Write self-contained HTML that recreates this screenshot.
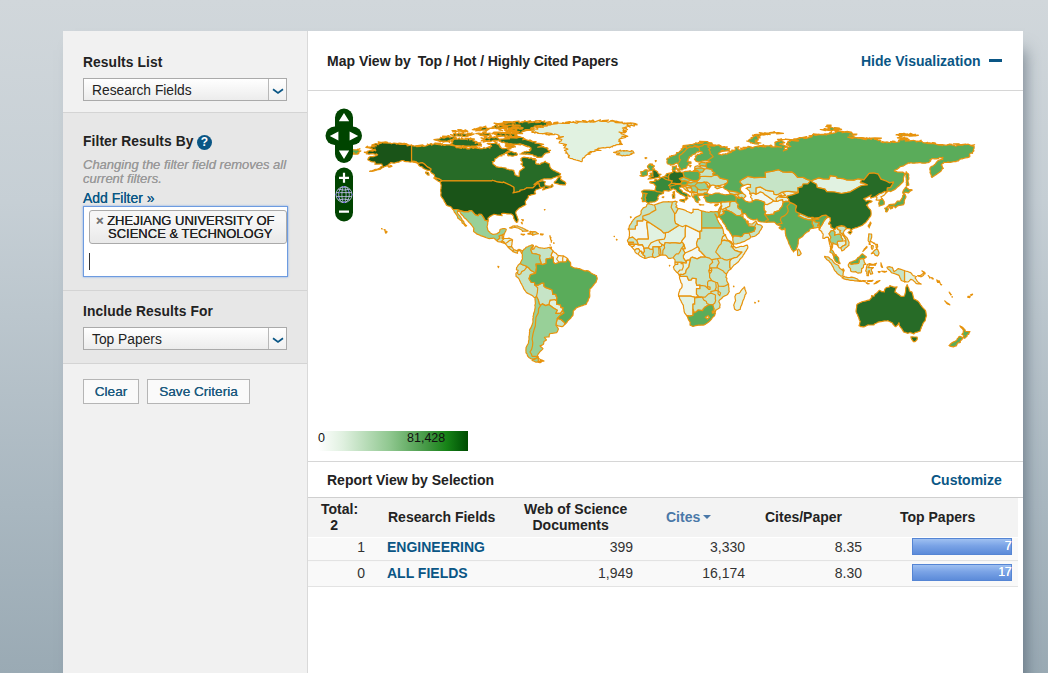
<!DOCTYPE html>
<html><head><meta charset="utf-8"><title>Essential Science Indicators</title>
<style>
*{box-sizing:border-box;margin:0;padding:0}
html,body{width:1048px;height:673px;overflow:hidden}
body{font-family:"Liberation Sans",Arial,sans-serif;font-size:14px;color:#222;
background:linear-gradient(180deg,#d1d7db 0%,#c6cfd5 30%,#a9b7c0 75%,#9aaab4 100%);position:relative}
#wrap{position:absolute;left:63px;top:31px;width:960px;height:660px;background:#fff;box-shadow:7px 14px 15px -5px rgba(50,65,82,.55)}
#side{position:absolute;left:0;top:0;width:245px;height:660px;background:#f1f1f1;border-right:1px solid #d9d9d9}
.sec{position:absolute;left:0;width:244px;border-top:1px solid #d4d4d4}
.h{position:absolute;left:20px;font-weight:bold;font-size:13.8px;color:#222;white-space:nowrap;letter-spacing:.1px}
.sel{position:absolute;left:20px;width:204px;height:23px;border:1px solid #aaa;background:linear-gradient(#fff,#ececec);font-size:13.8px;line-height:23px;padding-left:8px;color:#222}
.sel i{position:absolute;right:0;top:0;width:18px;height:21px;border-left:1px solid #b8b8b8;background:linear-gradient(#fff,#f0f0f0)}
.sel i svg{position:absolute;left:3px;top:9.2px}
.btn{position:absolute;height:25px;border:1px solid #b5b5b5;background:#fafafa;color:#1d5a7e;font-size:13.6px;line-height:24.5px;text-align:center;text-shadow:0 0 .6px #1d5a7e}
#main{position:absolute;left:245px;top:0;width:715px;height:660px;background:#fff}
.mh{position:absolute;font-weight:bold;font-size:14px;color:#222;white-space:nowrap}
.lnk{position:absolute;font-weight:bold;font-size:14px;color:#0a5685;white-space:nowrap}
.hr{position:absolute;left:0;width:715px;height:1px;background:#d6d6d6}
table{border-collapse:collapse}
</style></head><body>
<div id="wrap">
<div id="side">
 <div class="h" style="top:24px">Results List</div>
 <div class="sel" style="top:47px">Research Fields<i><svg width="12" height="7" viewBox="0 0 12 7"><path d="M1 1.2 L6 5 L11 1.2" fill="none" stroke="#0a5685" stroke-width="1.7"/></svg></i></div>
 <div class="sec" style="top:81px;height:179px;background:#e7e7e7">
  <div class="h" style="top:21px">Filter Results By</div>
  <div style="position:absolute;left:134px;top:22px;width:15px;height:15px;border-radius:50%;background:#0a5685;color:#fff;font-weight:bold;font-size:12px;line-height:15px;text-align:center">?</div>
  <div style="position:absolute;left:20px;top:45px;width:215px;font-style:italic;font-size:13px;line-height:14px;color:#999;text-shadow:0 0 .4px #999">Changing the filter field removes all current filters.</div>
  <div style="position:absolute;left:20px;top:77px;font-size:14px;color:#0a5685;text-shadow:0 0 .4px #0a5685">Add Filter »</div>
  <div style="position:absolute;left:20px;top:93px;width:205px;height:71px;border:1px solid #6d9be0;background:#fff;box-shadow:0 0 2px #7aa7e8">
   <div style="position:absolute;left:5px;top:3px;width:198px;height:34px;border:1px solid #aaa;border-radius:3px;background:linear-gradient(#f6f6f6 30%,#e9e9e9);font-size:13px;line-height:13px;color:#222;text-shadow:0 0 .5px #222;padding:3px 0 0 0;text-align:right;padding-right:11.5px;white-space:nowrap"><span style="position:absolute;left:6px;top:2.5px;font-size:13px;font-weight:bold;color:#777;text-shadow:0 0 .5px #777">×</span>ZHEJIANG UNIVERSITY OF<br><span style="padding-right:2px">SCIENCE &amp; TECHNOLOGY</span></div>
   <div style="position:absolute;left:5px;top:46px;width:1px;height:17px;background:#333"></div>
  </div>
 </div>
 <div class="sec" style="top:259px;height:74px;background:#e7e7e7">
  <div class="h" style="top:13px">Include Results For</div>
  <div class="sel" style="top:36px">Top Papers<i><svg width="12" height="7" viewBox="0 0 12 7"><path d="M1 1.2 L6 5 L11 1.2" fill="none" stroke="#0a5685" stroke-width="1.7"/></svg></i></div>
 </div>
 <div class="sec" style="top:332px;height:328px;background:#f1f1f1">
  <div class="btn" style="left:20px;top:15px;width:56px">Clear</div>
  <div class="btn" style="left:84px;top:15px;width:103px">Save Criteria</div>
 </div>
</div>
<div id="main">
 <div class="mh" style="left:19px;top:22px">Map View by <span style="margin-left:3px;letter-spacing:-.1px">Top / Hot / Highly Cited Papers</span></div>
 <div class="lnk" style="left:553px;top:22px">Hide Visualization</div>
 <div style="position:absolute;left:681px;top:28px;width:13px;height:3px;background:#0a5685"></div>
 <div class="hr" style="top:59px"></div>
 <div id="map" style="position:absolute;left:0;top:60px;width:715px;height:370px;overflow:hidden">
<svg width="715" height="370" viewBox="0 0 715 370" style="position:absolute;left:0;top:0">
<g stroke="#e8930c" stroke-width="1.2" stroke-linejoin="round">
<path fill="#c6e4c6" stroke="none" d="M339.7,112.8L346.2,114.0L350.0,112.6L355.2,110.9L360.5,110.7L364.5,110.9L367.5,110.2L369.2,110.9L367.8,113.3L368.9,115.0L367.8,115.9L370.1,117.5L376.2,118.9L383.2,122.3L385.0,121.1L385.0,118.2L390.2,118.3L393.7,120.1L400.7,121.3L402.4,120.6L405.9,120.8L406.8,123.0L408.6,126.3L409.4,128.9L412.1,133.3L414.5,136.8L415.0,138.5L415.4,142.5L417.5,143.7L419.4,148.8L422.0,150.0L425.3,152.9L425.5,155.0L427.8,156.9L432.2,155.5L435.7,155.4L439.3,154.1L439.8,156.9L438.3,159.4L437.1,161.1L433.9,166.3L430.4,170.7L426.0,174.1L422.7,178.0L420.3,179.7L418.5,183.2L417.8,186.3L419.0,187.2L418.7,189.8L420.6,193.1L421.0,197.1L421.3,200.5L419.6,203.5L415.5,205.6L414.3,206.8L411.2,209.4L410.8,210.8L412.1,213.4L411.9,216.7L407.7,219.1L407.5,220.7L407.5,221.8L406.6,224.5L404.2,227.0L402.4,229.4L399.3,232.0L397.2,233.4L394.9,234.1L389.3,234.3L385.0,235.5L382.2,234.3L381.8,230.6L380.2,228.0L378.8,224.7L376.6,221.9L375.3,214.1L373.4,211.2L370.6,205.1L370.6,202.8L371.9,198.5L373.8,196.6L374.1,193.6L372.7,190.6L371.5,185.6L371.0,183.7L369.4,181.8L366.8,179.2L365.4,176.2L366.6,174.7L367.1,173.3L367.1,171.0L367.0,168.9L365.6,167.2L364.9,166.8L362.2,167.4L360.5,167.5L358.7,165.1L357.5,164.1L354.7,164.1L352.1,164.4L349.1,165.8L346.5,166.8L345.1,166.1L342.1,166.0L339.5,166.7L336.9,167.4L334.3,166.3L331.1,164.1L329.9,163.0L328.1,162.1L326.9,160.4L326.8,159.4L324.7,157.1L323.8,155.9L322.0,154.5L320.8,153.4L320.6,151.9L319.4,149.5L321.2,147.0L321.5,142.0L321.2,139.4L320.3,138.0L322.0,133.8L324.7,129.8L326.9,126.9L330.8,124.9L332.9,123.2L333.0,120.3L335.1,117.1L338.1,115.7Z"/>
<path fill="#f2f8f2" d="M245.1,160.1L245.9,160.9L247.4,161.9L248.4,162.6L249.1,163.7L250.4,164.6L249.8,166.0L248.6,168.0L251.2,171.5L247.2,172.7L245.5,171.5L245.1,166.0L243.9,166.0L243.0,164.6L243.9,162.0ZM250.4,164.6L251.8,164.6L253.2,164.8L254.0,164.8L255.6,164.9L254.7,166.7L254.7,171.0L252.1,171.0L251.2,171.5L248.6,168.0L249.8,166.0ZM255.6,164.9L256.4,165.5L257.7,166.3L258.8,167.1L259.6,167.7L258.2,170.8L254.7,171.0L254.7,166.7ZM441.8,102.4L445.3,102.0L447.9,103.2L450.5,102.0L452.3,100.8L454.9,101.7L456.6,103.4L458.4,104.6L462.7,107.4L466.2,110.0L465.4,110.0L462.7,111.9L459.2,113.6L456.6,113.1L456.6,111.4L454.0,110.3L450.2,109.0L447.9,108.8L444.4,110.0L444.0,108.8L444.0,107.4L443.3,106.9L442.6,106.3L442.8,105.2L443.5,104.1L442.3,103.4ZM567.3,105.5L571.6,102.5L573.7,102.0L576.9,100.3L578.5,101.5L577.4,102.7L576.7,103.7L575.6,104.4L574.3,105.3L572.9,105.8L573.5,106.8L574.3,107.9L571.5,109.3L570.6,109.1L569.1,109.2L568.0,109.0L568.7,107.7L569.0,106.3L567.9,105.9ZM456.5,123.2L459.2,123.9L465.9,123.2L466.2,121.1L471.1,119.6L472.4,117.3L474.1,115.6L475.0,112.1L475.9,111.0L480.8,110.5L478.9,110.5L477.6,110.2L475.0,111.0L474.6,108.6L472.4,109.0L468.9,110.5L467.6,110.3L466.3,110.2L465.4,110.0L462.7,111.9L459.2,113.6L456.6,113.1L455.9,115.9L456.3,119.4L457.9,120.8ZM511.3,138.8L511.9,136.9L513.1,135.0L514.3,133.3L516.1,129.8L517.8,127.7L520.1,125.8L522.2,126.7L522.5,129.8L520.6,132.8L522.7,133.3L523.1,136.4L524.8,137.3L526.1,137.4L526.9,137.6L525.3,139.5L523.1,139.9L521.0,142.8L522.9,146.3L521.7,148.9L523.4,152.4L524.1,154.5L522.5,157.6L522.7,156.5L522.1,155.2L522.2,154.1L521.5,152.9L521.4,151.6L521.1,150.6L520.8,149.3L520.6,147.8L520.4,146.3L519.0,146.2L517.8,146.3L516.9,147.0L516.6,147.5L516.0,147.4L514.8,147.2L514.9,146.1L515.0,144.8L515.2,143.7L514.9,142.7L514.0,141.8L513.8,140.8L512.7,139.8ZM320.3,138.0L327.3,138.0L327.3,135.0L329.0,134.3L329.0,129.8L334.8,129.8L334.8,127.6L341.4,131.6L338.7,131.6L339.6,139.2L340.4,146.7L340.4,148.1L333.4,148.1L329.9,148.2L328.7,149.6L324.7,146.1L321.2,147.0L321.1,145.9L321.5,144.4L321.4,143.4L321.5,142.0L321.4,140.8L321.2,139.4L320.6,138.7ZM377.8,134.3L392.0,141.1L392.0,147.7L390.0,147.9L388.5,152.4L389.3,155.9L383.2,159.4L377.1,162.0L374.5,157.8L377.1,157.6L376.0,153.8L375.3,152.4L373.8,151.2L373.6,150.0L377.1,145.6L377.1,138.5ZM371.5,185.6L372.7,185.3L373.6,185.3L379.0,185.3L380.6,189.1L383.2,188.9L384.1,187.2L388.3,187.7L388.1,191.5L388.8,194.3L392.0,193.9L392.0,197.6L388.5,197.6L388.5,203.2L390.9,205.6L387.4,206.3L382.3,205.2L374.5,205.2L370.6,205.1L370.5,203.9L370.6,202.8L371.0,201.3L371.6,199.9L371.9,198.5L372.9,197.6L373.8,196.6L374.1,195.2L374.1,193.6L373.8,192.6L372.9,191.6L372.7,190.6L372.4,189.4L371.8,188.0L371.5,186.9ZM371.0,183.7L371.9,183.2L372.4,182.8L372.7,183.7L372.4,184.3L371.5,185.1ZM323.8,155.9L326.1,154.7L326.1,153.1L329.9,153.4L329.9,153.8L334.3,153.6L335.5,155.9L336.0,157.3L336.5,160.4L335.5,161.8L333.6,162.1L333.7,160.4L332.0,160.2L331.3,158.8L330.4,157.6L328.3,157.8L326.8,159.4L325.6,158.1L324.7,157.1ZM377.1,162.0L383.2,159.4L389.3,155.9L390.0,155.9L391.3,157.6L391.1,159.4L392.3,160.2L394.0,162.0L397.9,166.1L392.7,166.1L389.2,167.9L384.1,166.1L382.3,167.5L382.5,168.9L378.8,169.3L378.3,171.2L375.5,167.2L375.3,164.6Z"/>
<path fill="#e1f2e1" d="M194.1,143.9L196.2,142.8L195.9,144.1L195.6,145.3L195.7,146.3L194.6,147.4L194.1,147.4ZM193.9,150.0L195.7,147.7L197.1,147.5L198.7,147.5L199.8,147.4L201.4,147.2L202.5,147.7L203.8,148.3L204.6,148.9L201.8,149.3L199.7,151.0L197.9,152.4L196.7,152.2L195.7,150.8ZM204.6,148.9L204.3,150.3L204.0,151.8L204.0,153.3L203.6,154.7L203.7,155.9L200.0,155.9L199.3,155.1L198.6,154.1L197.8,153.3L196.7,152.4L197.9,152.4L199.7,151.0L201.8,149.3ZM219.9,143.0L220.8,143.1L222.4,143.1L223.3,143.2L224.2,143.6L224.7,144.1L224.7,140.8L223.4,140.7L222.7,140.4L221.7,140.8L222.4,141.4L223.1,142.0L222.1,142.3L221.2,142.4L219.9,142.7ZM222.4,39.1L217.3,39.6L224.7,38.2L225.2,37.2L226.5,37.8L229.7,38.2L229.7,36.1L227.0,35.6L229.2,37.1L231.1,36.0L231.1,36.1L235.3,36.5L233.0,34.3L233.3,34.2L232.0,33.6L239.6,34.7L235.5,35.0L237.1,34.6L238.2,34.0L242.5,34.0L243.3,33.5L249.5,32.6L245.1,32.5L245.0,33.1L248.8,32.5L247.2,32.5L250.0,31.2L249.6,31.0L245.8,31.7L254.9,32.5L254.1,32.4L254.8,31.7L257.9,32.5L253.5,32.5L261.4,32.3L259.7,30.8L262.6,30.8L261.5,30.5L257.5,31.3L265.7,31.3L269.2,32.3L264.9,30.6L268.4,32.0L273.1,30.5L267.6,30.0L271.3,31.1L271.4,30.6L279.1,31.3L276.6,30.6L275.9,29.7L278.7,30.6L274.3,29.5L277.4,29.8L279.3,31.2L281.9,29.5L282.4,31.4L281.9,31.1L285.3,29.2L285.9,31.1L281.3,31.0L284.8,29.0L286.9,30.9L292.4,28.7L291.8,30.3L293.8,30.0L294.1,29.7L300.6,29.0L297.8,30.1L293.6,30.4L296.6,29.8L300.2,31.2L303.4,29.8L304.2,29.4L308.5,30.6L302.4,29.8L307.3,30.3L306.3,30.7L308.0,31.7L314.2,31.9L308.0,30.2L311.5,31.9L310.0,31.5L313.3,31.1L314.4,31.1L315.0,32.5L314.3,31.8L314.7,31.6L315.8,32.9L320.4,31.8L319.9,33.3L316.3,32.1L323.4,32.6L321.7,31.8L324.6,32.2L327.6,32.6L325.6,33.2L329.0,34.0L329.0,33.2L326.2,33.1L327.3,32.8L326.3,35.1L323.5,34.1L321.9,34.9L318.9,34.3L322.2,36.2L320.3,35.3L320.0,35.5L314.4,37.1L318.7,37.3L317.5,36.1L315.9,37.7L315.0,39.5L319.5,38.6L316.3,40.4L318.5,40.3L317.2,41.7L315.2,40.4L316.4,42.0L310.9,41.0L313.3,41.9L313.3,42.9L313.0,42.5L319.8,45.3L313.9,45.3L316.8,45.5L317.7,46.5L312.7,47.7L313.5,46.8L311.0,48.6L311.5,49.1L311.5,49.0L312.8,50.4L310.5,50.0L313.5,52.3L311.5,52.5L314.4,53.3L309.0,53.6L307.5,54.1L307.3,54.6L305.0,54.7L304.7,55.4L304.6,55.9L303.8,55.4L301.4,56.8L302.7,56.1L299.0,56.4L297.9,56.7L298.5,56.6L297.4,56.8L294.8,56.7L295.6,56.7L294.1,56.8L289.7,57.6L291.0,57.1L291.4,57.5L286.8,59.0L293.0,59.5L290.2,59.2L287.8,59.7L286.9,60.4L285.3,60.6L284.6,60.6L282.0,60.6L283.3,61.7L281.1,61.7L280.1,62.0L282.1,63.1L279.4,63.3L277.3,64.9L277.0,65.4L276.6,66.4L274.9,67.1L274.2,68.5L274.4,69.2L274.0,70.7L272.2,70.3L271.3,69.8L269.6,69.3L267.8,69.0L267.0,68.6L265.3,68.3L264.3,67.6L262.2,67.3L260.3,66.5L261.2,65.2L260.3,65.2L261.4,64.6L260.0,63.8L259.5,62.4L257.3,62.0L258.8,61.5L257.8,60.0L256.5,59.4L259.9,58.1L257.3,57.0L256.0,56.9L257.4,55.1L258.1,53.9L255.4,54.3L258.5,53.7L253.9,52.5L251.1,52.0L251.6,50.3L252.9,50.2L253.9,48.5L252.1,48.1L248.5,47.6L255.4,45.6L250.5,46.2L251.1,44.6L249.1,43.5L246.5,43.0L246.9,43.3L246.5,43.6L238.2,43.7L237.4,42.8L241.0,44.2L243.8,43.0L242.6,42.9L244.2,42.6L239.0,41.8L234.4,42.9L234.9,42.8L234.6,42.9L235.2,42.7L230.4,42.4L229.2,42.2L230.2,41.9L227.3,41.1L227.7,40.8L227.0,42.2L225.9,41.2L223.9,41.3L226.0,41.1L223.4,39.9ZM240.8,213.6L242.0,209.2L246.9,208.5L248.6,209.8L248.6,213.2L252.5,213.8L253.0,216.7L255.1,216.7L254.6,219.3L252.5,222.4L247.6,222.3L249.3,219.3L245.1,216.7ZM378.0,96.4L383.2,96.8L384.1,98.5L383.7,99.7L382.3,101.1L380.6,100.3ZM382.3,101.1L383.7,99.7L385.0,101.0L383.7,102.2L383.3,101.8ZM383.7,102.2L385.0,101.0L385.8,100.6L386.0,103.7L386.7,104.1L385.0,106.0L384.5,105.5L383.9,104.8L383.7,103.5ZM385.8,100.6L387.6,101.7L389.2,101.5L390.2,103.2L386.7,104.1L386.0,103.7ZM396.5,91.2L398.9,91.1L401.0,92.4L402.4,94.4L399.3,96.1L399.3,94.0ZM447.9,103.2L447.9,96.8L452.4,95.9L458.4,99.4L465.4,100.3L466.2,103.4L468.9,103.7L470.6,103.0L474.1,101.1L477.6,104.3L474.1,105.1L473.2,103.7L470.6,105.1L469.7,106.3L468.0,107.2L468.5,110.3L467.4,110.2L466.2,110.0L462.7,107.4L458.4,104.6L456.6,103.4L454.9,101.7L452.3,100.8L450.5,102.0ZM470.6,103.0L474.1,101.1L478.5,100.3L481.1,100.4L488.1,101.1L489.0,101.5L490.4,101.8L487.2,102.9L484.2,103.9L479.4,105.1L478.8,106.3L474.1,106.3L471.5,106.2L473.2,105.1L474.1,105.1L477.6,104.3L474.1,101.1ZM468.0,107.2L469.7,106.3L470.6,105.1L473.2,103.7L474.1,105.1L473.2,105.1L471.5,106.2L474.1,106.3L478.8,106.3L480.8,108.1L480.8,110.2L479.1,110.3L477.6,110.2L475.0,111.0L474.6,108.6L472.4,109.0L468.9,110.5L468.5,110.3ZM503.8,89.5L510.8,86.9L515.2,87.9L521.0,88.1L522.2,84.6L528.6,85.7L529.2,87.2L535.3,87.6L538.8,89.0L545.8,89.1L550.1,87.8L554.0,88.3L552.4,91.6L555.4,92.1L559.4,93.8L553.6,94.5L549.3,96.8L545.4,99.0L542.3,100.8L533.5,102.5L526.5,101.0L518.7,100.6L516.9,98.2L509.1,96.4L508.5,93.3L503.8,90.7ZM505.2,126.3L505.6,127.2L510.8,126.7L510.8,128.2L505.6,128.4ZM412.9,112.4L414.2,110.7L416.4,111.0L419.9,110.7L423.9,110.3L422.0,111.6L421.7,115.2L417.8,117.0L414.3,118.7L412.6,117.1L413.8,115.0L413.1,113.8L412.8,112.6ZM525.3,139.5L526.9,137.6L527.1,138.2L528.8,135.9L530.0,138.5L532.7,139.5L531.8,141.1L533.9,142.8L536.2,145.5L537.9,148.6L537.9,149.6L535.3,150.0L534.4,150.0L534.6,148.1L533.2,146.7L533.2,144.8L531.8,143.2L528.5,143.5L526.5,144.4L526.9,141.1ZM529.9,154.7L529.2,151.5L530.0,150.1L534.4,150.0L535.3,150.0L537.9,149.6L537.9,153.6L534.9,155.0L532.7,156.9L531.7,156.8L530.9,156.6L530.2,155.7ZM596.5,179.5L597.4,180.0L599.0,180.3L600.4,180.8L601.1,181.1L602.6,181.6L603.6,182.5L604.2,183.6L605.2,184.6L606.1,184.8L607.4,185.3L608.4,185.6L607.7,186.1L607.0,186.8L607.9,188.0L608.7,189.3L609.6,190.6L610.5,191.4L611.8,192.3L613.1,193.1L611.6,193.0L610.1,192.8L608.7,192.7L607.6,192.0L606.9,190.9L606.0,190.2L605.2,189.3L604.0,188.7L602.6,188.4L602.0,189.2L601.1,190.1L600.0,191.0L598.8,191.0L597.7,190.7L596.5,190.8ZM609.6,184.7L610.6,184.6L612.2,184.6L613.6,183.9L614.3,183.0L615.7,182.3L616.0,183.7L615.2,184.5L614.2,185.2L613.1,185.8L612.0,185.5L610.5,185.2ZM613.9,179.9L615.5,180.7L616.6,181.3L617.1,182.0L617.1,182.8L616.1,182.0L615.0,180.8ZM620.2,184.6L621.2,185.6L622.3,186.5L621.8,187.0L621.2,185.7ZM393.7,120.1L393.7,136.8L393.7,140.2L392.0,140.2L392.0,141.1L377.8,134.3L374.5,135.7L371.0,134.2L367.5,132.4L366.6,129.3L366.6,122.5L367.5,122.5L370.1,117.5L371.5,117.7L373.4,118.1L374.6,118.4L376.2,118.9L377.9,119.5L378.7,120.3L380.6,121.0L382.0,121.6L383.2,122.3L383.8,121.7L385.0,121.1L385.1,119.7L385.0,118.2L386.0,118.3L387.4,118.4L389.0,118.3L390.2,118.3L391.2,119.0L392.6,119.5ZM341.4,131.6L353.1,139.2L355.6,141.8L357.5,141.6L357.3,145.8L356.3,148.1L350.7,148.9L349.5,149.1L346.5,150.3L343.0,151.9L340.9,155.0L340.4,156.8L336.0,157.3L335.5,155.9L334.3,153.6L329.9,153.8L329.9,152.4L328.7,149.6L329.9,148.2L333.4,148.1L340.4,148.1L340.4,146.7L339.6,139.2L338.7,131.6ZM357.5,141.6L360.5,141.1L371.0,134.2L374.5,135.7L377.8,134.3L377.1,138.5L377.1,145.6L373.6,150.0L373.8,151.2L371.9,152.4L367.5,151.9L363.6,151.9L361.9,152.2L357.2,151.5L356.3,154.7L353.8,153.4L351.6,151.5L350.7,148.9L356.3,148.1L357.3,145.8ZM413.6,148.9L414.7,145.5L417.5,143.7L417.7,145.1L418.3,146.2L418.9,147.6L419.4,148.8L420.6,149.3L422.0,150.0L423.3,150.8L424.0,151.9L425.3,152.9L424.1,153.3L421.3,150.5L419.0,149.8L416.2,149.1L413.6,150.1ZM424.1,153.3L425.3,152.9L425.5,154.0L425.5,155.0L425.0,155.9L423.1,155.9ZM425.0,155.9L425.5,155.0L426.9,156.0L427.8,156.9L429.0,156.5L430.5,156.1L432.2,155.5L433.1,155.4L434.7,155.5L435.7,155.4L436.9,154.8L437.9,154.4L439.3,154.1L439.8,155.6L439.8,156.9L439.0,158.2L438.3,159.4L437.9,160.2L437.1,161.1L436.5,162.5L435.3,163.8L434.9,165.0L433.9,166.3L432.8,167.4L431.9,168.4L431.3,169.5L430.4,170.7L429.5,171.5L428.3,172.4L427.4,173.2L426.0,174.1L425.1,175.2L424.3,176.1L423.5,177.1L422.7,178.0L421.7,176.4L421.7,170.1L423.2,168.2L423.4,167.9L426.0,166.7L428.7,166.3L433.9,161.1L432.2,161.1L426.9,159.4L424.6,156.8ZM401.7,177.4L403.3,176.9L403.8,179.2L400.7,179.7ZM400.7,179.7L403.8,179.2L403.3,180.9L401.6,182.8ZM370.6,205.1L374.5,205.2L382.3,205.2L387.4,206.3L390.9,205.6L394.2,205.9L392.8,206.5L390.7,206.3L386.7,206.8L386.7,213.2L385.0,213.2L385.0,218.1L385.0,224.4L381.5,225.2L380.4,224.9L378.8,224.7L378.1,223.8L377.4,222.9L376.6,221.9L376.1,220.3L376.0,218.7L375.6,217.1L375.5,215.7L375.3,214.1L374.5,213.1L374.0,212.0L373.4,211.2L373.1,210.0L372.2,208.7L371.6,207.6L371.4,206.2ZM436.2,195.9L436.9,197.0L436.8,198.3L437.5,199.4L437.9,200.7L438.3,201.9L437.7,203.2L436.9,204.2L436.8,205.3L436.4,206.3L436.0,207.7L435.3,209.0L434.8,210.1L434.4,211.5L434.1,212.8L433.6,214.1L432.8,215.5L432.4,217.0L432.2,218.4L430.9,218.8L430.3,219.2L429.0,219.5L428.0,219.0L426.9,218.4L426.3,217.0L426.1,215.4L425.7,214.1L426.3,212.6L426.8,211.3L427.6,209.8L427.3,208.2L427.1,207.0L426.9,205.4L427.6,204.3L427.8,203.2L429.0,202.7L430.2,202.3L431.3,202.1L432.4,200.8L432.9,199.8L433.9,198.6L434.7,197.7L435.7,196.9ZM320.8,153.4L326.1,153.1L326.1,154.7L323.8,155.9L323.2,155.2L322.0,154.5L321.5,154.0ZM326.8,159.4L328.3,157.8L330.4,157.6L331.3,158.8L332.0,160.2L329.9,163.0L329.0,162.7L328.1,162.1L327.3,161.3L326.9,160.4ZM329.9,163.0L332.0,160.2L333.7,160.4L333.6,162.1L335.5,161.8L335.0,163.7L336.9,164.9L336.9,167.4L335.4,166.8L334.3,166.3L333.1,165.6L332.0,164.9L331.1,164.1L330.6,163.5ZM340.4,156.8L340.9,155.0L343.0,151.9L346.5,150.3L349.5,149.1L350.7,148.9L351.6,151.5L353.8,153.4L353.5,155.2L351.6,155.9L350.0,155.7L344.9,155.9L345.1,158.5L341.8,158.1ZM367.1,173.3L369.8,173.3L369.8,171.2L373.2,171.2L373.1,172.7L375.0,172.7L375.3,175.9L374.1,179.0L371.9,179.0L369.4,181.8L368.3,181.0L367.7,180.2L366.8,179.2L366.1,178.3L365.8,177.1L365.4,176.2L365.7,175.4L366.6,174.7ZM369.4,181.8L371.9,179.0L374.1,179.0L375.3,175.9L375.0,172.7L373.1,172.7L373.2,171.2L378.1,172.0L378.3,171.2L378.8,169.3L382.5,168.9L381.5,172.4L380.9,175.9L378.3,178.8L377.6,182.0L375.2,183.5L372.4,183.3L371.0,183.7L370.3,182.7ZM367.1,171.0L369.8,171.2L369.8,173.3L367.1,173.3L366.9,172.2ZM361.4,174.3L361.9,174.5L361.5,175.0ZM308.4,148.4L309.1,148.6L308.7,149.1ZM306.0,145.3L306.5,145.3L306.3,145.6ZM425.7,195.0L426.0,195.7L425.5,195.7Z"/>
<path fill="#c6e4c6" d="M188.8,149.6L191.8,147.0L190.9,145.1L194.1,143.9L194.1,147.4L195.1,147.5L195.7,147.7L193.9,150.0L192.5,151.0L191.2,150.8L190.1,150.7L189.2,150.0ZM192.5,151.0L193.9,150.0L195.7,150.8L196.7,152.2L195.7,152.1L194.4,151.7L193.6,151.5ZM203.7,155.9L204.6,156.8L205.1,157.6L205.8,158.5L204.9,160.6L204.0,159.5L202.9,158.7L201.4,157.6L200.8,156.8L200.0,155.9ZM205.8,158.5L207.3,159.1L208.4,159.7L210.0,158.9L211.0,158.3L212.2,158.7L213.4,159.3L214.7,159.9L213.8,162.5L213.1,161.5L212.8,160.4L211.8,159.8L211.0,159.4L210.0,160.2L209.3,160.9L209.6,162.3L208.6,161.9L207.5,161.6L206.4,161.1L204.9,160.6ZM201.6,136.9L202.6,136.4L203.7,135.8L204.9,135.0L206.2,134.9L208.0,135.0L209.3,134.9L210.4,135.5L212.0,136.0L213.2,136.5L214.3,136.9L215.4,137.5L216.7,138.1L217.9,138.8L219.2,139.2L220.3,139.9L219.1,140.1L217.5,140.1L215.7,140.2L214.5,140.4L214.2,139.7L213.7,139.0L212.2,138.3L211.0,137.5L209.8,137.0L208.3,136.6L206.7,136.1L205.7,136.5L204.4,136.8L203.2,137.1ZM224.7,140.8L226.0,140.7L227.6,140.8L228.5,141.4L229.5,142.2L230.4,142.7L229.2,142.8L227.6,143.2L226.4,143.6L224.7,144.1ZM213.1,143.0L214.1,143.2L215.6,143.3L216.6,143.4L215.4,144.1L214.2,143.7L213.3,143.5ZM232.5,142.8L234.0,143.1L235.3,143.0L234.8,143.8L233.9,143.9L232.5,143.7ZM307.5,61.0L308.1,61.2L308.9,60.1L310.7,60.2L311.5,59.6L312.5,59.1L312.8,60.1L315.5,59.5L316.4,59.5L315.6,60.1L318.7,59.6L318.5,59.9L318.8,59.8L319.3,59.7L321.9,60.5L323.1,60.4L323.1,59.7L324.5,59.9L325.2,60.3L325.4,61.4L326.2,62.0L323.0,62.4L323.6,63.3L324.1,62.9L322.0,63.8L321.5,64.2L319.7,64.3L319.5,64.2L317.3,64.7L316.8,64.8L315.6,64.3L314.8,64.9L312.9,64.3L313.4,64.7L312.9,64.2L310.7,63.9L308.6,63.6L311.5,62.4L311.8,61.9L311.0,62.4L310.9,62.2L308.0,62.0L305.6,61.4ZM213.7,128.6L214.5,128.8L215.4,128.9L214.9,130.0L214.5,129.2ZM213.3,131.6L213.9,132.4L214.2,132.9L214.3,132.2L213.8,131.4ZM225.4,154.5L225.0,155.9L224.9,157.3L224.5,158.5L225.9,158.0L226.5,157.0L227.0,155.9L227.6,155.0L228.9,155.4L229.7,156.0L231.1,156.6L232.5,156.8L233.9,157.0L235.1,157.2L236.4,157.3L237.5,157.2L239.3,156.9L240.4,156.5L241.6,156.4L242.8,157.4L243.4,158.3L244.4,159.1L245.1,160.1L243.9,162.0L243.0,164.6L243.9,166.0L243.4,167.2L238.1,168.0L238.1,172.4L234.6,173.6L232.9,172.9L232.9,171.5L231.5,167.2L232.0,164.2L227.6,162.8L224.1,162.5L223.6,161.1L222.7,159.0L223.3,156.8ZM212.3,172.4L214.5,173.8L218.0,175.0L218.4,176.7L216.3,179.3L213.7,180.6L212.8,182.8L211.0,183.7L209.6,182.6L209.6,180.9L209.8,180.1L210.2,179.3L209.4,179.0L208.4,178.8L208.5,177.7L208.6,176.7L209.5,175.5L210.2,174.1L211.2,173.3ZM209.6,180.9L209.6,182.6L211.0,183.7L212.8,182.8L213.7,180.6L216.3,179.3L218.4,176.7L218.0,175.0L220.6,176.7L222.7,179.3L226.8,181.6L227.6,182.5L222.4,183.7L221.0,187.7L223.3,191.5L226.6,191.5L226.8,194.1L229.7,196.7L229.4,201.1L228.5,205.4L227.1,206.8L225.9,206.2L225.1,205.3L224.1,204.5L223.0,203.9L221.8,203.2L220.4,202.6L218.9,201.9L217.9,200.8L217.3,199.8L216.6,199.0L215.6,197.6L215.2,196.3L214.5,195.0L213.9,193.8L213.5,192.8L212.7,191.8L212.3,190.6L211.7,189.6L211.2,188.3L210.5,187.2L209.4,186.3L208.1,185.4L208.0,184.1L207.9,182.5L208.5,181.7ZM228.5,205.4L229.4,201.1L229.7,196.7L226.8,194.1L230.3,194.1L233.6,192.2L235.9,192.0L235.9,195.0L237.3,196.4L241.6,197.9L244.2,199.0L244.8,203.3L247.9,203.3L248.1,205.1L249.0,206.3L248.6,209.8L246.9,208.5L242.0,209.2L240.8,213.6L237.6,214.6L234.3,212.9L232.5,214.6L231.1,212.4L230.3,208.9ZM249.3,227.5L253.0,228.5L256.5,231.5L256.7,233.6L255.9,234.2L255.2,235.1L254.0,235.7L252.6,235.3L251.7,235.2L250.4,235.0L249.2,234.4L247.9,234.1L248.3,231.5ZM242.0,156.4L243.5,156.2L243.4,157.4L242.0,157.4ZM189.9,175.3L190.9,175.5L190.4,176.6ZM236.4,118.5L237.1,118.5L236.7,119.0ZM241.8,144.9L242.3,145.1L242.0,145.6ZM242.1,146.5L243.0,146.7L242.5,147.4ZM242.5,147.9L243.0,148.2L242.7,148.6ZM243.0,149.3L243.7,149.6L243.4,150.0ZM243.2,150.7L243.5,151.0L243.4,151.2ZM245.6,151.9L246.2,152.1L245.8,152.4ZM242.0,153.8L242.3,154.0L242.1,154.1ZM379.7,90.5L382.9,89.0L385.0,89.5L389.7,89.5L388.8,90.9L385.8,90.7L382.9,91.9L379.7,91.6ZM373.9,95.7L377.1,95.4L378.8,94.2L382.9,95.2L383.2,96.8L378.0,96.4L380.6,100.3L382.3,101.1L380.8,100.5L379.3,99.9L378.0,99.4L377.3,98.5L376.2,97.7L375.8,97.1L375.0,96.4ZM406.5,114.2L407.7,113.5L409.2,113.3L410.5,113.1L409.4,114.2L408.8,114.4L407.7,114.9ZM389.7,98.2L392.8,99.0L397.2,98.4L400.0,99.0L399.3,100.6L398.9,102.0L397.8,102.1L396.3,102.0L395.4,103.2L390.2,103.2L389.2,101.5ZM388.8,90.9L389.7,89.5L392.0,87.1L391.3,85.5L397.2,85.3L403.3,85.7L405.6,84.5L405.9,84.3L409.4,84.1L412.1,87.2L416.4,88.1L419.9,89.0L419.4,91.9L416.8,93.1L415.6,93.5L414.2,93.8L412.5,94.3L411.2,94.7L410.0,94.7L408.6,94.9L410.1,95.2L411.1,95.7L412.5,95.8L413.8,96.3L412.5,96.5L411.7,97.0L410.3,97.4L409.1,97.8L408.0,96.9L406.8,96.1L407.6,95.5L408.6,94.9L407.1,94.5L405.4,94.2L404.2,94.0L403.4,94.6L402.4,95.4L401.7,96.4L399.3,96.1L402.4,94.4L401.0,92.4L398.9,91.1L396.5,91.2L393.4,91.9L389.7,91.7ZM391.1,81.3L394.6,80.8L396.5,78.2L399.3,77.5L404.0,78.4L404.2,79.9L407.2,82.2L404.9,82.7L405.6,84.5L403.3,85.7L397.2,85.3L391.3,85.5L391.8,83.4ZM386.9,77.5L386.7,75.9L387.6,75.4L389.5,74.7L391.2,75.4L392.5,75.6L392.5,74.4L397.9,75.1L399.3,77.5L396.5,78.2L393.5,77.0ZM419.9,99.6L425.2,100.3L428.7,101.0L431.3,102.4L430.8,103.4L428.7,103.2L426.0,103.6L422.5,102.9L421.6,101.8L421.0,100.8ZM426.0,103.6L428.7,103.2L431.3,106.3L431.3,107.4L428.3,106.0L426.4,104.6ZM428.7,103.2L430.8,103.4L431.3,102.4L434.8,102.2L435.7,103.1L437.2,104.1L437.9,105.0L437.2,105.8L436.2,106.7L435.6,107.5L435.5,108.3L433.9,106.3L431.3,107.4L431.3,106.3ZM431.8,91.1L432.2,89.8L434.8,88.1L440.0,85.3L446.1,86.7L452.4,86.4L457.5,86.4L457.0,81.3L464.5,80.1L470.6,78.7L474.5,80.8L478.5,81.1L483.7,80.8L486.2,82.4L489.8,86.5L495.1,86.4L498.9,88.4L502.6,89.5L499.8,93.0L495.1,93.0L493.9,95.9L489.8,96.8L490.4,100.6L489.3,101.0L488.1,101.1L481.1,100.4L478.5,100.3L474.1,101.1L470.6,103.0L468.9,103.7L466.2,103.4L465.4,100.3L458.4,99.4L452.4,95.9L447.9,96.8L447.9,103.2L445.3,102.0L441.8,102.4L441.9,101.5L441.8,100.6L441.2,99.7L439.8,98.6L439.1,97.7L437.9,97.5L439.2,96.9L440.0,96.3L441.2,96.3L442.6,96.3L442.4,94.9L442.6,93.7L441.7,93.6L440.2,93.3L439.1,93.3L438.4,93.6L436.8,94.1L436.0,94.5L434.8,94.2ZM490.2,124.9L491.9,122.5L496.0,124.3L500.3,126.3L501.5,126.4L502.7,126.5L504.0,126.7L504.0,129.1L499.5,128.6L495.6,127.4ZM489.5,161.1L489.5,160.0L489.7,159.1L490.2,158.0L491.4,159.0L492.1,160.2L492.7,161.5L493.2,162.8L492.1,163.6L491.6,164.4L490.8,164.5L489.8,164.6L489.6,163.7L489.5,162.8L489.6,162.0ZM427.8,110.5L429.4,112.4L430.8,113.8L429.5,115.0L430.4,117.3L433.4,119.0L433.9,121.1L434.8,122.9L433.7,122.9L432.2,124.6L428.1,124.3L423.4,121.1L418.5,119.0L417.8,117.0L421.7,115.2L422.0,111.6L423.9,110.3ZM411.4,117.5L412.6,117.1L413.8,115.0L412.9,114.9L412.0,116.3ZM411.0,123.9L411.4,122.7L411.8,121.5L412.1,120.3L412.6,117.1L414.3,118.7L417.8,117.0L418.5,119.0L414.7,120.3L416.4,122.0L415.5,122.9L412.9,124.3ZM432.2,124.6L433.7,122.9L434.8,122.9L435.0,124.3L434.8,125.5L433.7,125.5ZM438.8,131.9L438.9,131.0L439.1,129.8L440.2,130.2L440.3,131.2L440.0,132.2ZM424.8,146.5L425.5,144.8L427.8,144.8L430.9,145.1L432.2,145.6L433.9,145.5L435.7,142.7L440.9,142.0L442.8,146.0L442.2,147.0L441.2,147.9L439.6,148.5L438.3,149.3L437.0,150.1L435.7,150.7L434.1,151.1L432.9,151.6L431.7,152.1L429.9,152.4L428.7,152.9L427.5,153.0L426.0,152.9L425.6,151.9L425.2,150.7L424.8,149.2L424.8,148.0ZM440.9,142.0L446.1,140.2L447.4,136.8L446.5,135.5L447.9,133.1L448.6,131.7L449.2,132.5L449.6,133.3L451.1,133.7L452.6,134.0L453.7,134.9L454.5,135.9L453.6,137.2L453.1,138.4L452.3,139.5L451.4,140.7L451.0,142.0L449.9,142.9L448.8,143.7L447.7,144.7L446.1,145.5L444.8,145.6L444.0,145.8L442.8,146.0ZM439.7,132.4L440.9,135.0L446.5,135.5L447.9,133.1L448.6,131.7L448.3,130.7L448.1,129.8L447.4,130.4L446.7,131.0L445.4,131.9L444.7,132.9L443.2,133.0L441.8,132.9L440.5,132.8ZM528.8,135.9L533.5,134.7L536.5,135.4L538.8,137.5L537.5,138.5L536.5,139.4L535.7,140.8L534.9,142.0L535.8,142.9L536.2,144.1L537.3,145.2L538.3,146.2L539.3,147.2L539.8,148.6L540.5,150.0L541.1,151.5L540.9,153.1L540.9,154.5L539.6,155.3L538.8,156.2L537.6,156.9L536.7,157.8L536.5,158.5L535.3,159.3L533.9,159.9L533.3,158.6L533.2,157.6L532.7,156.9L534.9,155.0L537.9,153.6L537.9,149.6L537.9,148.6L536.2,145.5L533.9,142.8L531.8,141.1L532.7,139.5L530.0,138.5ZM540.4,173.3L541.2,172.5L541.6,171.5L543.2,173.4L544.0,173.3L546.1,172.6L547.5,172.6L550.5,172.4L551.2,170.5L551.0,169.8L552.4,167.5L555.4,167.7L555.9,168.9L556.1,170.1L556.3,171.2L557.0,172.2L558.0,173.3L556.8,173.3L555.9,173.6L555.5,175.0L555.4,176.4L554.7,177.1L553.6,177.6L553.7,178.7L553.5,179.7L553.6,180.9L552.8,182.0L551.2,181.9L550.1,182.1L548.8,181.5L547.5,180.6L546.3,180.8L545.3,180.9L543.8,180.6L542.6,180.0L542.5,178.8L542.5,177.6L541.7,176.8L540.7,175.9L540.3,174.5ZM516.6,165.3L517.8,165.6L519.3,165.8L520.4,166.0L521.3,166.8L522.4,168.0L523.9,168.8L524.8,169.8L525.1,170.7L525.7,171.5L526.7,172.4L528.1,173.2L529.6,174.1L530.9,175.0L530.9,175.9L531.4,176.7L532.1,177.5L533.6,178.5L534.6,179.3L535.3,180.2L535.4,181.4L535.1,182.6L535.1,183.8L534.9,185.1L533.9,185.1L532.7,185.1L531.9,184.3L530.6,183.6L529.6,182.8L528.8,182.0L528.3,181.0L527.3,180.2L526.5,179.3L525.9,177.9L525.3,176.4L524.5,175.2L524.0,174.2L523.5,173.2L522.7,172.0L521.7,171.1L521.1,170.1L519.9,169.3L518.6,168.4L517.9,167.4L516.8,166.3ZM533.9,186.8L535.3,186.2L536.2,185.4L537.0,185.8L538.3,186.1L539.7,186.6L541.1,186.5L542.1,186.4L543.7,186.1L544.9,186.3L545.9,186.7L547.0,187.0L547.8,187.4L549.4,188.0L550.1,188.6L550.0,190.1L548.2,189.9L546.9,189.8L545.5,189.5L544.0,189.4L542.8,189.3L541.5,189.1L539.9,188.7L538.8,188.6L537.1,188.2L536.0,187.9L535.0,187.3ZM559.4,173.6L560.5,173.0L561.2,172.7L562.7,172.9L563.5,173.1L565.0,173.4L566.3,173.1L567.0,172.7L568.5,172.2L567.6,173.3L567.3,174.3L565.9,174.1L564.3,174.2L563.0,174.2L561.5,174.1L561.0,175.3L559.9,176.6L561.1,176.6L562.4,176.7L563.8,176.6L565.5,176.6L564.3,177.6L563.3,178.3L563.5,179.7L564.3,181.1L564.7,182.6L563.8,182.9L562.6,183.3L562.1,182.0L561.6,180.8L561.5,179.7L560.3,180.0L560.5,181.5L560.4,183.0L560.5,184.6L558.9,184.6L559.1,183.5L558.7,182.3L558.9,181.1L558.0,180.4L557.7,179.7L558.3,178.3L558.4,176.6L558.8,175.2ZM579.0,176.4L580.2,175.9L581.6,175.7L582.9,176.1L584.2,176.4L585.0,177.9L585.4,179.3L586.0,180.7L587.0,180.0L588.3,179.2L589.2,178.3L590.4,177.6L591.4,177.9L592.9,178.3L594.0,178.7L595.1,179.1L596.5,179.5L596.5,190.8L595.3,190.3L593.9,189.8L593.0,189.1L592.8,188.2L592.1,187.2L591.6,185.8L591.2,184.6L589.9,183.9L588.5,183.4L586.9,182.8L585.8,182.4L584.4,182.0L583.4,181.6L582.7,180.7L582.1,179.7L581.1,178.9L580.3,178.3L579.5,177.6ZM551.0,189.3L551.7,189.7L552.2,190.3L551.4,190.3L550.5,190.1ZM552.8,189.4L553.4,190.0L554.0,190.5L552.8,190.5ZM554.5,189.6L555.9,189.7L557.1,189.8L558.0,189.8L557.3,190.2L556.3,190.6L555.3,190.2ZM559.4,189.8L560.6,189.7L562.1,189.5L563.5,189.5L565.0,189.4L564.4,190.0L563.3,190.5L561.9,190.4L561.2,190.4L559.8,190.5ZM558.0,191.5L559.0,191.8L559.9,192.2L561.2,192.7L559.8,192.9L558.6,192.3ZM565.9,192.9L566.9,192.3L567.9,191.4L568.5,190.6L572.0,189.6L569.4,191.5L568.2,192.2L566.8,192.7ZM572.9,171.9L573.1,173.1L573.7,174.1L574.1,175.1L574.6,176.4L573.4,175.9L573.1,174.9L573.0,173.6L573.2,172.6ZM573.7,180.2L574.7,180.3L576.4,180.4L577.6,180.5L578.6,180.4L577.5,180.9L576.4,181.3L574.8,180.8ZM570.2,180.6L571.1,180.7L572.3,180.7L571.1,181.6ZM534.4,178.5L535.3,179.1L536.2,179.9L535.9,178.9L535.3,177.8ZM568.5,190.6L572.0,189.6L569.4,191.5ZM560.3,147.2L560.6,145.7L560.7,144.2L560.8,142.8L562.1,143.0L563.6,143.0L563.7,144.2L563.7,145.4L563.6,146.7L563.1,147.8L562.8,148.9L562.4,150.1L563.5,150.7L564.4,151.2L565.6,151.9L566.8,152.4L566.4,152.8L565.2,151.9L564.1,151.0L563.3,150.9L561.8,150.8L560.8,150.8L560.4,150.0L560.1,149.3L560.3,148.3ZM563.3,162.8L563.9,162.0L565.1,160.9L565.9,159.9L567.0,159.1L568.0,158.5L569.4,158.0L570.0,159.3L570.5,160.6L571.1,162.0L570.7,163.0L570.4,164.1L569.7,164.6L569.2,165.1L568.3,164.6L567.1,164.1L566.5,163.0L565.9,162.0L564.3,162.3ZM554.9,160.4L555.8,159.5L556.8,158.6L557.7,157.6L558.9,156.8L558.9,155.4L558.1,156.2L557.2,157.2L556.3,158.0L555.8,159.2ZM567.6,153.3L568.5,153.3L569.4,153.3L569.5,154.5L569.7,155.9L569.0,156.6L568.5,157.3L568.1,156.4L568.2,155.4L568.0,154.4ZM563.3,154.5L564.5,154.6L565.4,155.0L565.1,156.1L565.0,157.3L564.1,158.5L563.6,157.5L563.3,156.8L563.4,155.8ZM561.5,151.7L561.9,152.6L562.4,153.3L561.2,153.4L561.2,152.5ZM549.6,167.0L550.3,166.6L551.4,166.3L551.0,167.7ZM623.6,186.6L624.7,187.1L625.3,187.9L624.4,188.0L623.9,187.4ZM628.8,188.9L629.7,189.7L630.5,190.5L631.1,191.5L629.7,191.5L629.1,190.2ZM631.1,189.6L631.4,190.6L632.0,191.5L631.4,191.7L631.3,190.7ZM632.3,192.7L632.8,193.3L633.7,193.8L632.8,193.6ZM641.2,201.1L641.5,201.6L642.3,202.3L641.6,202.3ZM642.4,202.8L643.3,203.7L642.6,203.9ZM644.0,205.6L644.5,205.9L644.0,206.1ZM636.7,209.9L637.7,210.7L638.6,211.4L639.9,212.2L641.0,212.9L641.9,213.9L640.7,213.3L639.3,212.9L638.2,211.8L637.7,210.8ZM659.9,205.4L661.3,205.4L662.2,205.6L661.7,206.6L660.6,206.5L659.9,206.5ZM662.4,204.0L663.2,203.6L664.6,203.2L664.3,203.7L663.4,204.4ZM339.7,112.8L340.7,112.6L342.1,113.1L343.6,113.3L344.6,113.8L346.2,114.0L346.9,115.0L347.9,118.9L343.9,121.1L341.3,122.9L334.8,125.1L334.8,127.6L334.8,129.8L329.0,129.8L329.0,134.3L327.3,135.0L327.3,138.0L320.3,138.0L321.1,136.7L321.3,135.1L322.0,133.8L323.1,132.4L323.7,131.0L324.7,129.8L325.1,128.9L326.4,127.8L326.9,126.9L328.2,126.1L329.3,125.5L330.8,124.9L331.9,124.2L332.9,123.2L333.2,121.6L333.0,120.3L333.6,119.1L334.4,118.2L335.1,117.1L335.9,116.6L336.9,116.2L338.1,115.7L338.6,114.7L338.9,113.6ZM364.5,110.9L363.1,116.3L366.6,122.5L366.6,129.3L367.5,132.4L371.0,134.2L360.5,141.1L357.5,141.6L355.6,141.8L353.1,139.2L341.4,131.6L334.8,127.6L334.8,125.1L341.3,122.9L343.9,121.1L347.9,118.9L346.9,115.0L346.2,114.0L347.4,113.5L348.5,113.2L350.0,112.6L351.3,112.1L352.6,111.7L353.6,111.4L355.2,110.9L356.5,110.9L358.0,110.8L359.5,110.9L360.5,110.7L361.7,110.9L363.4,110.9ZM370.1,117.5L367.5,122.5L366.6,122.5L363.1,116.3L364.5,110.9L365.8,110.6L367.5,110.2L368.2,110.7L369.2,110.9L368.2,112.1L367.8,113.3L368.7,114.3L368.9,115.0L367.8,115.9L368.8,116.6ZM393.7,136.8L414.5,136.8L414.7,137.6L415.0,138.5L415.3,139.8L415.6,141.1L415.4,142.5L416.4,143.1L417.5,143.7L414.7,145.5L413.6,148.9L413.6,150.1L413.1,152.9L411.2,154.5L410.0,156.6L407.7,161.1L409.4,162.8L411.7,165.6L412.8,167.0L409.4,167.7L404.2,168.6L403.8,168.9L401.6,167.2L397.9,166.1L394.0,162.0L392.3,160.2L391.1,159.4L391.3,157.6L390.0,155.9L389.3,155.9L388.5,152.4L390.0,147.9L392.0,147.7L392.0,141.1L392.0,140.2L393.7,140.2ZM413.6,150.1L416.2,149.1L419.0,149.8L421.3,150.5L424.1,153.3L423.1,155.9L425.0,155.9L424.6,156.8L426.9,159.4L432.2,161.1L433.9,161.1L428.7,166.3L426.0,166.7L423.4,167.9L422.5,168.0L421.7,168.2L419.0,169.1L416.4,168.7L414.5,167.4L412.8,167.0L411.7,165.6L409.4,162.8L407.7,161.1L410.0,156.6L411.2,154.5L413.1,152.9ZM409.4,167.7L412.8,167.0L414.5,167.4L416.4,168.7L419.0,169.1L421.7,168.2L423.2,168.2L421.7,170.1L421.7,176.4L422.7,178.0L421.8,178.8L420.3,179.7L419.9,180.9L419.0,182.1L418.5,183.2L415.9,181.1L415.7,180.2L409.4,176.7L409.2,175.7L409.3,174.8L410.3,173.1L411.2,171.7ZM409.4,176.7L415.7,180.2L415.9,181.1L418.5,183.2L418.5,184.3L418.1,185.3L417.8,186.3L419.0,187.2L418.7,188.6L418.7,189.8L419.3,190.9L419.8,191.9L420.6,193.1L417.3,194.8L415.5,195.3L411.2,195.2L410.5,195.0L409.4,191.5L407.7,191.3L404.2,189.9L403.7,189.4L401.6,186.3L401.6,182.8L403.3,180.9L403.8,179.2L403.3,176.9L409.3,176.7ZM403.8,168.9L404.2,168.6L409.4,167.7L411.2,171.7L410.3,173.1L409.3,174.8L409.0,175.8L409.3,176.7L403.3,176.9L401.7,177.4L401.7,174.1L404.7,171.2ZM371.5,185.3L372.2,184.4L372.4,183.3L375.2,183.5L377.6,182.0L378.3,178.8L380.9,175.9L381.5,172.4L382.5,168.9L382.3,167.5L384.1,166.1L389.2,167.9L392.7,166.1L397.9,166.1L401.6,167.2L403.8,168.9L404.7,171.2L401.7,174.1L401.7,177.4L400.7,179.7L401.6,182.8L401.6,186.3L403.7,189.4L400.5,189.8L399.6,191.2L399.6,195.7L402.1,196.2L402.1,198.3L400.7,198.3L397.5,195.2L394.2,194.5L392.5,194.6L392.0,193.9L388.8,194.3L388.1,191.5L388.3,187.7L384.1,187.2L383.2,188.9L380.6,189.1L379.0,185.3L373.6,185.3L372.8,185.3ZM388.5,197.6L392.0,197.6L392.0,193.9L392.5,194.6L394.2,194.5L397.5,195.2L400.7,198.3L402.1,198.3L402.1,196.2L399.6,195.7L399.6,191.2L400.5,189.8L403.7,189.4L404.2,189.9L407.7,191.3L408.0,193.8L408.2,196.6L407.2,198.6L408.0,199.3L402.8,200.7L403.1,202.1L400.5,202.8L397.2,206.1L394.2,205.9L390.9,205.6L388.5,203.2ZM407.7,191.3L409.4,191.5L410.5,195.0L410.1,196.2L410.3,200.0L412.6,201.9L411.7,204.7L410.0,202.8L410.3,200.4L408.0,199.3L407.2,198.6L408.2,196.6L408.0,193.8ZM394.2,205.9L397.2,206.1L400.5,202.8L403.1,202.1L404.7,202.8L407.5,204.0L407.3,208.0L407.7,209.4L406.8,212.0L404.7,213.9L401.4,213.6L398.9,212.5L398.4,210.6L395.8,209.1ZM420.6,193.1L420.7,194.5L420.6,195.7L421.0,197.1L420.9,198.3L420.9,199.5L421.3,200.5L420.6,201.6L420.2,202.4L419.6,203.5L418.3,204.2L416.7,204.9L415.5,205.6L414.8,206.1L414.3,206.8L413.3,207.7L412.2,208.5L411.2,209.4L410.8,210.8L411.6,212.1L412.1,213.4L412.0,214.6L411.7,215.6L411.9,216.7L410.9,217.2L409.8,218.0L408.8,218.6L407.7,219.1L407.5,220.7L406.5,221.0L406.1,221.6L405.8,220.0L405.9,217.6L404.7,213.9L406.8,212.0L407.7,209.4L407.3,208.0L407.5,204.0L404.7,202.8L403.1,202.1L402.8,200.7L408.0,199.3L410.3,200.4L410.0,202.8L411.7,204.7L412.6,201.9L410.3,200.0L410.1,196.2L410.5,195.0L411.2,195.2L415.5,195.3L417.3,194.8ZM385.0,218.1L385.0,213.2L386.7,213.2L386.7,206.8L390.7,206.3L392.8,206.5L394.2,205.9L395.8,209.1L398.4,210.6L398.9,212.5L401.4,213.6L397.2,216.0L395.3,217.9L394.6,219.7L390.2,219.0L388.5,220.7L386.2,221.8ZM321.2,147.0L324.7,146.1L328.7,149.6L329.9,152.4L329.9,153.4L326.1,153.1L320.8,153.4L320.6,151.9L319.8,150.6L319.4,149.5L320.1,148.3ZM336.9,167.4L336.9,164.9L335.0,163.7L335.5,161.8L336.5,160.4L336.0,157.3L340.4,156.8L341.8,158.1L345.1,158.5L345.3,161.3L344.4,163.4L345.1,166.1L343.6,165.9L342.1,166.0L340.8,166.3L339.5,166.7L338.4,167.1ZM345.1,166.1L344.4,163.4L345.3,161.3L345.1,158.5L344.9,155.9L350.0,155.7L350.7,157.1L351.0,160.6L350.9,162.8L352.1,164.4L350.8,164.9L350.2,165.2L349.1,165.8L347.7,166.3L346.5,166.8ZM352.1,164.4L350.9,162.8L351.0,160.6L350.7,157.1L350.0,155.7L351.6,155.9L352.4,158.5L353.0,164.1ZM353.0,164.1L352.4,158.5L351.6,155.9L353.5,155.2L353.8,153.4L356.3,154.7L356.6,156.8L354.9,159.4L354.7,164.1L354.0,164.0ZM354.7,164.1L354.9,159.4L356.6,156.8L356.3,154.7L357.2,151.5L361.9,152.2L363.6,151.9L367.5,151.9L371.9,152.4L373.8,151.2L375.3,152.4L375.5,155.0L373.2,157.6L372.4,159.9L370.6,162.8L368.4,162.8L367.1,164.1L364.9,166.8L363.8,167.0L362.2,167.4L361.5,167.3L360.5,167.5L359.7,166.4L358.7,165.1L358.0,164.6L357.5,164.1L356.2,164.0ZM364.9,166.8L367.1,164.1L368.4,162.8L370.6,162.8L372.4,159.9L373.2,157.6L375.5,155.0L375.3,152.4L376.0,153.8L377.1,157.6L374.5,157.8L377.1,162.0L375.3,164.6L375.5,167.2L378.3,171.2L378.1,172.0L373.2,171.2L369.8,171.2L367.1,171.0L367.0,170.1L367.0,168.9L366.3,168.1L365.6,167.2ZM450.3,209.8L451.0,210.1L450.5,210.6ZM446.7,211.3L447.5,211.7L447.0,212.2Z"/>
<path fill="#98d098" d="M145.1,118.5L149.3,118.5L156.0,120.6L160.9,120.6L160.9,119.7L163.8,119.7L167.3,123.6L170.0,124.6L170.8,123.2L173.5,123.4L176.1,127.2L176.9,129.1L180.1,130.0L179.7,131.5L179.7,132.8L179.4,134.4L179.0,135.9L179.6,137.2L179.5,138.3L180.1,139.4L180.5,140.2L181.7,141.0L182.2,142.0L183.8,142.8L184.8,143.4L186.6,143.2L187.9,143.0L189.2,142.7L190.2,141.8L191.5,141.1L191.8,139.8L192.0,138.5L193.3,138.0L195.0,137.7L196.2,137.5L197.1,137.7L198.3,138.2L197.9,139.7L197.1,141.1L196.8,141.9L196.2,142.8L194.1,143.9L190.9,145.1L191.8,147.0L188.8,149.6L187.5,148.7L186.9,147.9L185.7,147.0L184.3,147.3L182.7,147.4L181.3,147.7L179.9,147.2L178.3,146.7L176.9,146.1L175.7,145.6L174.1,145.1L172.6,144.6L171.4,144.0L170.5,143.6L169.1,143.2L168.0,142.3L167.0,141.5L165.6,140.6L165.6,139.0L165.9,137.6L165.3,136.5L164.6,135.5L163.8,134.5L163.2,133.6L162.3,132.5L161.2,131.6L160.4,130.6L159.4,129.6L158.6,128.6L157.7,127.8L156.6,127.0L156.0,126.3L155.2,125.2L154.3,124.2L153.0,123.0L152.4,122.0L152.1,120.8L150.6,120.4L149.5,119.9L149.4,121.0L149.5,122.0L150.0,122.9L150.7,123.7L151.6,124.6L152.7,126.0L153.4,127.2L154.0,128.6L155.1,129.8L155.9,130.9L156.1,131.7L156.8,132.8L157.7,133.8L158.6,134.7L157.7,135.2L156.6,134.2L155.7,133.0L154.2,132.1L153.9,130.8L153.4,129.8L152.2,129.0L151.2,128.1L149.9,127.2L149.5,125.9L149.0,124.6L148.1,123.4L147.2,122.0L146.3,121.0L145.9,119.6ZM214.7,159.9L215.3,159.1L216.3,158.0L217.3,157.4L218.0,156.4L218.9,156.0L219.8,155.7L220.9,155.0L222.6,154.6L224.1,153.8L225.4,154.5L223.3,156.8L222.7,159.0L223.6,161.1L224.1,162.5L227.6,162.8L232.0,164.2L231.5,167.2L232.9,171.5L232.9,172.9L228.0,173.1L228.5,176.7L227.6,182.5L226.8,181.6L222.7,179.3L220.6,176.7L218.0,175.0L214.5,173.8L212.3,172.4L212.7,171.3L213.2,170.2L213.7,169.2L214.5,168.0L214.3,166.5L214.3,165.2L214.5,163.7L213.8,162.5ZM232.5,214.6L234.3,212.9L237.6,214.6L240.8,213.6L245.1,216.7L249.3,219.3L247.6,222.3L252.5,222.4L254.6,219.3L256.0,221.9L252.5,224.2L249.3,227.5L248.3,231.5L247.9,234.1L248.8,235.4L249.8,236.8L250.4,238.1L249.9,239.3L249.5,240.4L248.6,241.6L247.0,241.8L245.6,242.1L244.2,242.3L242.8,242.5L241.6,242.8L241.2,244.4L241.1,245.9L239.7,246.0L237.7,246.2L236.4,246.3L237.0,247.1L237.6,248.0L238.5,248.9L237.3,249.7L235.9,250.6L235.8,251.8L235.5,253.2L234.3,253.9L233.5,254.4L232.0,254.9L232.8,255.8L234.1,256.7L235.0,257.6L234.2,258.6L233.0,259.7L231.8,260.9L231.1,261.9L230.1,263.2L229.4,264.5L229.6,265.2L230.4,265.9L227.6,265.4L224.1,265.4L223.3,262.8L221.9,261.0L223.6,258.4L224.5,254.9L224.8,251.5L224.1,248.0L225.0,242.8L225.9,239.3L227.3,235.0L227.6,230.6L228.0,226.3L230.3,221.9L230.6,217.6ZM230.1,266.6L230.2,267.9L230.4,269.0L230.1,270.4L231.7,270.3L232.6,270.5L233.8,270.6L234.7,270.1L236.0,270.1L234.8,269.4L233.8,269.2L231.5,268.0ZM227.1,206.8L228.5,205.4L230.3,208.9L231.1,212.4L232.5,214.6L230.6,217.6L230.3,221.9L228.0,226.3L227.6,230.6L227.3,235.0L225.9,239.3L225.0,242.8L224.1,248.0L224.8,251.5L224.5,254.9L223.6,258.4L221.9,261.0L223.3,262.8L224.1,265.4L227.6,265.4L230.4,265.9L229.5,266.5L228.0,267.4L227.4,267.9L225.9,268.5L224.9,268.2L223.3,268.0L221.7,267.1L220.6,266.2L219.7,265.2L219.3,264.0L219.0,262.9L218.0,261.9L218.0,260.7L217.9,259.2L218.0,257.9L218.0,256.7L218.6,255.4L219.2,254.2L220.1,252.8L220.6,251.5L220.5,250.1L221.0,248.7L221.0,247.1L220.9,245.7L221.3,244.2L221.5,242.8L221.4,241.7L221.8,240.5L221.5,239.3L221.9,238.1L222.8,237.0L223.3,235.8L223.9,234.6L224.3,233.3L224.7,231.9L225.0,230.6L224.9,229.3L224.8,227.9L225.3,226.7L225.0,225.4L225.6,223.9L225.5,222.7L226.2,221.3L226.6,219.7L226.8,218.4L227.1,217.0L227.2,215.6L226.8,214.2L227.4,212.9L227.3,211.5L227.2,209.9L227.0,208.4ZM230.1,266.6L231.5,268.0L233.8,269.2L232.2,269.5L231.7,270.0L230.1,270.4L231.9,270.9L232.9,271.5L232.1,271.6L230.7,271.3L229.2,271.0L227.6,271.1L226.6,270.4L225.5,270.0L224.1,269.4L225.0,268.5L226.8,267.6L228.0,267.2L228.6,267.1ZM371.3,87.6L375.0,86.4L376.2,86.4L379.7,87.6L382.9,89.0L379.7,90.5L376.2,89.8L374.1,90.4ZM378.8,93.3L379.6,92.6L379.7,91.6L382.9,91.9L385.8,90.7L388.8,90.9L389.7,91.7L386.7,94.7L382.9,95.2L378.8,94.2ZM373.9,94.2L378.0,93.8L378.8,94.2L377.1,95.4L373.9,95.7ZM383.2,96.8L382.9,95.2L386.7,94.7L389.7,97.5L389.2,98.2L389.7,98.2L389.2,101.5L387.6,101.7L385.8,100.6L385.0,101.0L383.7,99.7L384.1,98.5ZM389.2,98.2L389.7,97.5L386.7,94.7L389.7,91.7L393.4,91.9L396.5,91.2L399.3,94.0L399.3,96.1L401.7,96.4L400.9,97.8L400.0,99.0L397.2,98.4L392.8,99.0L389.7,98.2ZM386.7,78.9L386.9,77.5L393.5,77.0L396.5,78.2L394.6,80.8L391.1,81.3L389.9,80.5L389.7,79.6ZM392.5,74.4L391.2,73.9L391.1,73.3L391.1,72.1L392.1,72.3L393.0,71.3L395.1,71.4L395.6,71.3L397.3,71.8L398.9,71.6L397.9,75.1ZM504.0,129.1L505.2,129.3L507.0,129.8L507.3,131.0L511.3,131.4L510.5,132.9L509.6,134.7L511.2,133.6L511.9,136.9L511.3,138.8L511.1,137.4L510.5,136.1L509.5,136.4L508.2,136.8L506.9,136.8L505.6,137.1L505.4,135.0L504.0,132.4L504.3,130.2ZM410.0,120.6L410.6,119.5L410.8,118.5L411.4,117.5L412.6,117.1L412.1,120.3L411.4,121.3L411.2,122.6L411.0,123.7L410.7,122.7L410.1,121.6ZM521.0,142.8L523.1,139.9L525.3,139.5L526.9,141.1L526.5,144.4L528.5,143.5L531.8,143.2L533.2,144.8L533.2,146.7L534.6,148.1L534.4,150.0L530.0,150.1L529.2,151.5L529.9,154.7L529.0,153.9L528.3,153.3L527.4,153.2L526.4,152.9L525.4,152.4L524.8,151.7L525.0,152.7L524.6,154.0L524.6,155.0L524.5,156.2L523.9,157.5L523.4,158.8L524.6,159.5L525.3,160.4L525.9,161.7L526.5,163.0L527.4,163.5L528.3,164.2L526.7,165.1L525.0,163.7L524.7,162.9L524.1,162.3L523.0,161.8L521.8,161.1L522.3,159.8L522.5,158.9L522.5,157.6L524.1,154.5L523.4,152.4L521.7,148.9L522.9,146.3ZM393.7,120.1L393.7,136.8L414.5,136.8L413.8,135.7L413.1,134.5L412.1,133.3L411.3,132.2L410.5,131.1L410.3,130.1L409.4,128.9L409.0,127.6L408.6,126.3L408.0,125.3L407.5,124.2L406.8,123.0L408.0,124.2L408.6,125.5L409.8,126.7L410.6,125.4L411.0,123.9L410.7,122.8L410.5,121.6L410.0,120.6L408.7,120.7L407.4,120.6L405.9,120.8L404.8,120.8L403.3,120.6L402.4,120.6L401.8,121.0L400.7,121.3L399.2,121.0L397.6,120.9L396.8,120.5L395.0,120.2Z"/>
<path fill="#5aac5a" d="M259.6,167.7L260.3,168.8L261.0,169.8L261.9,170.8L262.6,171.9L262.7,173.4L262.6,175.0L263.6,175.5L264.9,176.2L266.1,176.7L267.2,177.1L268.5,177.1L270.2,177.5L271.3,177.6L272.4,178.1L274.0,178.8L275.3,179.2L276.6,179.9L277.6,179.8L278.7,179.7L280.1,179.9L281.6,180.7L282.6,181.7L283.8,182.4L285.3,183.3L286.6,183.8L287.5,184.2L288.5,184.6L288.6,185.8L289.1,186.8L289.2,188.0L288.6,189.3L288.3,190.3L287.9,191.5L286.8,192.4L286.0,193.5L285.1,194.6L284.5,195.5L283.7,196.5L282.4,197.4L281.8,198.5L281.9,200.0L281.6,201.5L281.7,203.0L281.8,204.5L281.7,205.9L281.0,207.1L280.3,208.4L280.1,209.8L279.2,211.0L278.7,212.0L278.3,213.2L277.2,213.6L275.8,214.0L274.5,214.6L273.1,215.0L271.3,215.6L270.4,216.0L268.7,216.7L267.6,217.5L267.1,218.5L265.9,219.3L265.2,220.2L265.2,221.7L265.1,223.1L264.9,224.5L263.6,225.7L263.0,226.8L262.0,227.9L260.9,228.9L259.6,230.1L259.0,231.3L258.0,232.4L256.7,233.6L256.5,231.5L253.0,228.5L249.3,227.5L252.5,224.2L256.0,221.9L254.6,219.3L255.1,216.7L253.0,216.7L252.5,213.8L248.6,213.2L248.6,209.8L249.0,206.3L248.1,205.1L247.9,203.3L244.8,203.3L244.2,199.0L241.6,197.9L237.3,196.4L235.9,195.0L235.9,192.0L233.6,192.2L230.3,194.1L226.8,194.1L226.6,191.5L223.3,191.5L221.0,187.7L222.4,183.7L227.6,182.5L228.5,176.7L228.0,173.1L232.9,172.9L234.6,173.6L238.1,172.4L238.1,168.0L243.4,167.2L243.9,166.0L245.1,166.0L245.5,171.5L247.2,172.7L251.2,171.5L252.1,171.0L254.7,171.0L258.2,170.8ZM362.2,74.2L362.5,73.4L359.7,73.0L359.3,72.5L358.9,71.1L359.3,69.2L358.7,68.1L359.6,67.1L361.4,67.0L361.4,66.0L361.7,65.2L363.9,65.5L363.5,64.6L364.9,64.5L366.6,64.2L367.7,63.7L368.2,63.1L368.4,62.9L368.5,61.7L370.6,61.7L371.5,60.6L371.9,60.3L373.2,59.3L374.4,58.9L373.1,57.9L373.2,58.1L375.3,57.2L374.4,55.9L378.8,56.8L378.0,55.4L377.3,55.9L375.0,54.5L381.9,53.8L380.2,54.2L382.3,53.7L384.6,53.4L385.5,53.2L386.1,52.8L386.7,53.0L388.0,51.7L389.6,52.7L390.4,51.6L391.1,51.8L392.7,52.2L394.5,52.4L389.6,52.1L395.4,51.4L391.5,50.4L399.5,50.5L400.0,50.7L399.8,51.6L399.9,51.8L400.8,51.7L403.9,51.9L404.2,52.8L404.3,53.2L402.4,54.0L401.8,53.1L399.1,54.1L400.3,53.7L398.9,53.3L395.4,53.5L394.9,54.7L391.1,55.6L386.7,54.7L385.8,55.1L385.0,56.1L381.5,55.9L378.8,57.7L377.1,59.9L375.3,61.5L373.9,62.9L371.3,64.6L371.3,68.1L372.4,68.6L371.5,70.4L370.6,71.6L369.6,72.5L368.4,72.1L367.9,72.3L366.6,73.0L365.9,73.4L364.3,74.0L363.7,73.9ZM369.6,72.5L370.6,71.6L371.5,70.4L372.4,68.6L371.3,68.1L371.3,64.6L373.9,62.9L375.3,61.5L377.1,59.9L378.8,57.7L381.5,55.9L385.0,56.1L385.8,55.1L387.6,55.8L391.1,57.0L391.6,59.4L392.1,60.6L390.5,60.6L390.3,61.2L389.0,60.8L389.1,61.1L387.2,62.6L387.2,62.7L387.6,62.9L386.4,63.1L383.9,64.0L384.1,64.6L383.3,65.2L381.7,65.5L381.1,66.2L381.6,66.6L380.2,68.1L380.1,69.5L379.2,70.6L382.9,70.9L383.1,72.3L380.6,72.8L380.6,74.0L379.0,75.1L378.9,76.1L378.0,77.3L376.7,77.6L375.3,77.5L374.8,78.7L373.9,79.0L372.5,78.7L372.2,77.6L371.9,76.8L370.9,75.6L370.6,74.9L370.3,73.8ZM381.8,74.4L383.2,74.5L382.5,75.4L382.2,75.9L381.7,75.0ZM392.1,60.6L391.6,59.4L391.1,57.0L387.6,55.8L385.8,55.1L386.7,54.7L391.1,55.6L394.9,54.7L395.4,53.5L398.9,53.3L405.2,54.5L400.7,54.7L399.8,55.9L402.4,57.3L400.7,58.7L402.4,60.8L401.9,62.4L403.3,63.4L405.1,65.7L402.4,67.6L398.6,69.9L397.6,69.8L395.4,70.0L394.8,69.9L393.5,70.4L390.7,71.0L390.2,70.9L387.9,70.1L387.6,69.7L386.4,68.1L387.2,67.4L388.1,66.0L387.2,65.2L387.2,65.3L388.7,64.4L389.3,64.1L389.3,63.4L392.1,63.5L392.2,62.4L392.8,62.4L394.7,62.3L394.2,61.5L393.9,60.6ZM364.2,78.4L364.8,77.0L364.2,75.8L365.9,75.4L367.0,75.3L368.4,74.7L368.6,75.7L368.0,76.8L369.1,77.2L367.9,78.3L367.1,79.1L366.6,79.7L365.0,79.6ZM369.4,78.2L370.7,77.9L371.9,77.7L371.9,79.1L370.6,79.9L369.4,79.1ZM346.5,78.0L344.9,78.0L344.4,77.7L345.2,76.6L345.8,75.8L346.5,74.9L345.6,74.4L343.4,74.5L344.4,73.6L344.6,73.2L344.0,73.2L342.0,72.9L341.3,73.2L340.7,73.8L339.5,75.1L339.5,76.1L340.4,77.2L341.3,77.8L340.9,78.7L341.6,79.9L343.3,79.6L344.8,79.4ZM344.8,82.2L343.4,82.1L342.0,82.4L342.6,82.9L342.8,83.8L342.1,84.3L340.9,85.0L342.5,85.4L343.9,85.5L345.3,85.3L344.8,84.6ZM332.5,85.0L333.6,85.2L335.1,85.3L336.6,84.9L337.5,84.7L339.0,84.3L339.4,83.5L339.5,82.4L339.2,81.1L340.4,80.3L339.5,79.1L338.7,78.8L336.9,78.9L336.1,79.8L335.1,80.3L334.1,80.7L332.5,80.8L333.1,81.5L332.9,82.4L333.7,83.6L333.0,84.2L332.0,84.6ZM334.6,102.2L335.7,102.0L339.2,102.7L338.1,102.9L337.9,105.1L337.2,106.3L337.8,108.6L337.1,110.3L335.5,110.6L334.4,110.7L334.4,109.4L334.6,108.3L333.4,107.7L334.1,106.6L334.6,105.1L334.8,103.6ZM374.8,81.3L376.2,80.8L377.3,80.4L378.8,80.3L380.4,80.2L381.4,79.9L382.3,79.8L383.0,80.3L384.6,80.5L389.9,80.5L391.1,81.3L391.8,83.4L391.3,85.5L392.0,87.1L389.7,89.5L385.0,89.5L382.9,89.0L379.7,87.6L376.2,86.4L375.5,83.8ZM366.8,92.4L368.4,92.6L372.7,92.4L374.1,90.4L376.2,89.8L379.7,90.5L379.2,91.9L378.8,93.3L378.0,93.8L373.9,94.2L371.3,93.3L368.4,93.5ZM385.0,106.0L386.7,104.1L390.2,103.2L395.4,103.2L395.4,104.1L394.5,104.2L393.0,104.2L392.0,104.3L390.7,104.6L389.7,104.8L390.2,106.0L390.7,107.2L391.5,108.0L392.0,109.0L391.1,109.2L390.2,109.3L390.1,110.6L390.2,111.6L389.1,111.3L388.5,111.0L387.6,110.3L387.2,109.5L386.9,108.3L385.9,107.0ZM391.3,113.3L392.9,113.6L394.5,113.8L395.8,113.8L394.2,113.8L393.0,114.0L392.0,114.2ZM395.6,106.3L396.7,107.1L397.2,108.1L397.8,109.5L398.1,110.7L398.8,110.9L399.8,111.2L401.0,111.5L402.3,111.8L403.3,111.9L404.6,111.6L405.9,111.6L407.1,111.8L408.2,111.8L409.4,111.9L410.7,111.6L412.0,111.4L412.9,111.0L412.9,112.4L414.2,110.7L416.4,111.0L419.9,110.7L423.9,110.3L427.8,110.5L428.3,106.0L426.4,104.6L426.0,103.6L422.5,102.9L421.3,103.2L419.9,103.7L418.6,103.7L417.4,103.8L416.4,103.7L415.1,103.4L414.2,103.1L412.9,102.9L412.0,102.5L411.2,102.0L409.9,102.0L409.0,102.1L407.7,102.0L406.2,102.6L405.1,103.0L404.2,103.6L403.0,103.6L402.1,103.4L400.7,103.4L400.1,102.7L398.9,102.2L397.8,102.2L396.3,102.0L395.4,103.2L395.4,104.1L396.9,104.5L398.1,104.8L399.2,104.9L400.7,104.8L399.3,105.0L398.3,105.1L396.8,105.1L396.4,105.7ZM403.8,53.7L407.6,54.2L406.7,54.2L405.1,54.0L407.7,54.4L407.0,54.6L411.2,53.9L412.5,54.7L411.5,54.6L412.9,54.7L411.1,54.8L414.0,56.0L416.6,55.8L412.4,56.1L419.3,55.9L418.8,56.6L418.1,57.7L419.6,57.6L421.7,57.7L420.5,59.4L421.7,59.8L420.7,59.9L419.2,59.8L418.0,59.5L418.4,59.9L414.2,60.3L413.8,59.9L415.4,59.2L412.9,59.8L414.1,60.5L411.1,61.6L411.3,61.6L410.3,62.9L412.2,63.6L410.8,63.0L413.6,63.9L414.7,63.8L414.6,63.2L417.1,63.0L418.0,62.6L418.7,63.3L419.9,62.6L419.6,62.1L423.5,61.3L420.8,60.3L424.0,60.1L425.2,60.1L425.2,59.7L423.7,59.1L426.6,59.4L426.9,59.4L427.5,57.7L427.3,57.7L426.9,56.3L431.0,55.9L429.4,56.0L429.9,56.5L430.4,56.8L429.5,57.5L431.3,58.9L435.5,58.3L432.4,57.2L433.9,57.3L434.3,57.9L437.7,57.6L438.3,56.9L434.8,56.3L438.5,56.4L440.7,56.1L439.9,55.4L442.6,55.9L445.3,56.8L442.9,57.1L445.3,56.5L445.2,56.9L445.7,56.0L449.7,55.2L450.8,55.8L450.3,56.1L451.4,55.4L448.7,55.4L452.0,54.5L454.5,54.7L454.0,54.7L455.8,53.9L451.9,55.2L455.8,55.9L458.3,54.9L457.5,56.1L455.5,54.5L464.1,55.1L463.0,54.8L461.9,54.6L462.8,54.1L464.0,54.7L463.8,55.0L462.7,55.9L467.1,55.9L468.9,56.0L468.3,55.3L473.6,56.1L470.6,55.9L469.7,55.5L470.3,55.5L467.0,54.8L467.1,54.2L467.0,53.1L467.1,52.5L466.8,51.6L468.6,51.0L467.2,51.0L469.7,50.2L471.9,50.3L469.5,48.4L472.4,48.1L473.3,47.7L472.6,49.3L473.5,47.9L473.0,48.6L477.1,48.5L473.3,49.2L474.6,50.4L476.7,51.6L475.1,52.1L471.5,53.1L475.9,54.2L479.5,55.9L476.2,56.6L476.7,56.8L476.2,58.0L478.5,58.7L478.5,58.6L477.6,58.9L475.5,59.8L475.9,59.8L475.3,59.8L478.8,58.6L479.4,58.3L479.4,57.7L479.2,57.7L479.8,56.0L481.1,55.9L482.8,55.5L478.5,53.7L478.6,52.6L481.2,52.9L479.4,51.6L480.0,50.5L482.5,50.2L481.1,49.0L483.5,49.3L477.2,48.1L485.8,48.8L485.5,49.3L485.5,48.7L490.1,49.9L483.8,49.3L489.2,50.1L490.7,49.9L485.7,47.9L491.4,47.7L491.6,47.1L491.0,46.6L495.9,46.3L493.8,46.5L489.0,47.6L498.9,45.5L496.0,47.6L496.7,47.2L498.2,47.4L501.2,46.4L504.1,45.6L502.1,44.7L500.8,45.0L504.6,44.4L503.9,44.9L504.6,43.5L507.2,43.5L505.3,42.9L512.4,43.7L510.8,43.3L506.8,44.4L511.1,43.6L516.7,43.2L517.1,42.8L518.3,44.1L516.5,42.9L519.9,43.2L526.0,42.2L513.8,43.8L521.3,42.6L521.3,42.0L523.3,41.0L523.7,40.6L522.9,42.3L526.8,42.0L529.4,40.5L527.1,40.7L528.4,39.8L530.2,39.4L531.8,40.0L538.6,41.2L532.3,40.0L529.5,39.9L536.2,41.2L539.2,40.4L542.9,41.0L537.5,40.5L534.1,41.8L537.7,40.6L543.0,41.8L544.0,41.7L543.1,41.1L544.8,43.1L549.0,43.1L546.9,43.7L548.4,43.8L541.3,44.1L544.2,44.1L545.8,45.1L545.9,45.9L541.3,46.2L542.3,46.4L545.0,47.3L539.8,46.1L544.3,47.3L547.2,46.5L547.5,46.9L545.7,45.9L548.3,46.7L556.4,46.9L552.4,46.5L549.1,47.3L558.9,47.2L553.2,47.7L558.2,48.7L557.8,47.1L558.0,48.1L556.6,48.5L561.9,47.2L556.0,48.2L558.7,46.7L563.6,48.5L563.7,47.0L559.5,47.3L566.8,46.9L573.5,47.2L566.5,48.3L566.8,47.6L570.7,49.6L572.0,49.0L572.7,49.4L572.9,51.0L575.7,51.6L575.5,51.6L574.3,50.7L576.2,51.1L579.5,51.1L579.0,51.9L578.8,50.8L582.0,51.8L583.0,50.5L582.5,50.7L585.8,50.9L584.6,50.0L587.0,50.4L585.6,51.3L583.2,51.0L586.3,51.5L589.5,51.1L591.6,50.6L590.5,49.4L590.8,49.0L591.6,48.9L594.7,49.0L595.9,48.5L599.3,48.7L599.3,48.8L600.3,49.6L600.8,49.9L599.8,48.8L601.2,48.5L597.3,50.1L604.0,49.7L605.2,49.3L608.0,50.0L610.1,50.5L613.2,49.2L611.3,50.1L608.2,50.8L609.8,50.1L612.2,50.7L612.4,50.5L613.8,50.4L615.1,51.6L615.7,51.8L619.0,51.7L619.6,51.4L618.0,51.9L622.1,51.8L618.9,52.4L623.0,52.6L626.7,52.4L624.4,51.6L626.9,51.9L627.6,52.2L622.5,52.0L629.9,53.6L629.7,53.9L632.8,54.1L629.8,53.6L634.6,53.6L634.1,54.8L634.2,53.5L634.5,53.7L638.6,54.4L638.4,54.2L641.5,53.3L639.9,53.9L642.3,53.3L644.0,53.6L643.7,53.3L639.6,53.5L643.8,54.0L646.6,54.6L647.2,55.0L648.0,55.1L649.1,54.5L648.9,53.3L645.3,52.9L650.8,52.8L651.7,53.2L650.2,54.1L655.2,54.1L651.3,53.8L657.7,53.2L657.6,53.7L660.3,53.2L664.2,54.9L662.6,54.6L666.7,53.8L663.1,54.3L665.2,54.8L664.6,55.1L666.2,55.6L666.0,57.7L665.7,58.0L665.3,59.0L666.0,59.8L664.5,61.1L664.6,62.0L664.5,62.3L662.5,62.0L662.0,62.7L661.3,63.9L661.8,64.4L661.8,65.7L660.3,66.4L659.4,66.7L659.6,66.3L658.2,66.8L656.9,67.0L654.6,67.8L654.2,67.6L652.0,68.3L651.1,69.0L650.6,69.8L648.3,70.1L648.0,70.7L646.4,70.5L644.6,70.9L642.3,71.3L640.1,71.3L640.2,70.9L639.2,71.4L636.3,71.5L635.8,71.1L635.7,72.0L633.7,73.2L633.2,74.2L634.4,75.0L634.0,76.1L635.4,77.3L634.2,77.9L633.6,78.9L633.2,79.8L632.5,80.6L630.8,81.8L629.7,82.5L628.7,83.2L628.0,83.8L626.7,84.6L625.5,85.2L624.9,85.7L623.9,86.4L623.2,85.3L623.3,84.2L622.7,82.9L622.0,81.5L622.4,79.9L621.8,78.5L621.9,77.4L622.7,75.9L624.3,75.0L625.3,74.8L626.2,73.8L627.4,73.1L628.0,71.9L628.6,71.1L629.7,69.9L631.9,68.9L634.9,68.2L634.4,67.4L634.9,66.4L633.3,66.9L632.2,66.5L630.7,67.0L630.3,67.7L629.7,67.6L628.4,67.8L626.3,67.8L624.0,67.5L623.6,68.1L621.9,68.7L622.8,69.7L621.1,71.2L620.1,71.6L620.1,71.5L617.2,72.2L614.9,72.2L613.9,72.1L612.7,71.7L611.1,71.7L609.6,71.8L607.3,71.8L608.6,71.8L606.3,72.2L604.5,72.2L603.3,71.7L601.4,72.2L600.0,71.9L599.5,72.8L597.9,73.3L596.9,74.1L595.7,74.8L593.3,75.4L591.8,75.8L591.2,76.8L589.4,77.9L589.0,78.5L587.1,78.9L586.3,79.9L587.7,80.4L589.2,80.9L590.4,81.1L591.7,81.1L593.6,81.2L594.7,81.1L595.7,81.8L597.0,82.5L596.6,83.7L596.1,84.9L595.6,86.4L595.3,87.8L595.5,89.3L595.2,90.7L594.5,91.6L593.4,92.4L592.8,93.2L591.6,94.2L590.9,95.0L589.4,96.0L588.6,96.9L587.7,97.7L586.9,98.5L585.5,99.1L584.2,99.8L582.8,100.6L581.7,100.2L580.7,99.9L579.3,100.8L578.5,101.5L579.0,99.4L579.3,96.8L582.5,96.4L585.5,91.2L581.6,91.9L578.6,90.2L572.9,88.1L570.2,83.2L565.9,82.0L561.2,82.4L559.4,84.6L555.9,88.8L554.0,88.3L550.1,87.8L545.8,89.1L538.8,89.0L535.3,87.6L529.2,87.2L528.6,85.7L522.2,84.6L521.0,88.1L515.2,87.9L510.8,86.9L503.8,89.5L502.6,89.5L498.9,88.4L495.1,86.4L489.8,86.5L486.2,82.4L483.7,80.8L478.5,81.1L474.5,80.8L470.6,78.7L464.5,80.1L457.0,81.3L457.5,86.4L452.4,86.4L446.1,86.7L440.0,85.3L434.8,88.1L432.2,89.8L431.8,91.1L434.8,94.2L436.0,94.5L434.7,95.1L433.8,95.5L433.0,95.9L432.8,96.8L432.2,97.7L432.5,99.1L433.0,100.3L434.1,101.3L434.8,102.2L431.3,102.4L428.7,101.0L425.2,100.3L419.9,99.6L418.9,98.9L417.4,98.2L416.4,97.7L415.7,96.9L414.7,96.3L415.5,95.4L416.8,94.5L417.3,93.8L418.2,93.0L416.8,93.1L419.4,91.9L419.9,89.0L416.4,88.1L412.1,87.2L409.4,84.1L405.9,84.3L405.6,84.5L404.9,82.7L407.2,82.2L404.2,79.9L404.0,78.4L399.3,77.5L397.9,75.1L398.9,71.6L402.1,71.0L402.1,70.9L402.4,70.9L400.5,69.9L399.8,69.9L398.6,69.9L402.4,67.6L405.1,65.7L403.3,63.4L401.9,62.4L402.4,60.8L400.7,58.7L402.4,57.3L399.8,55.9L400.7,54.7L406.7,55.1L402.4,54.0L401.9,54.3ZM384.6,80.5L385.5,79.7L386.7,78.9L389.7,79.6L389.9,80.5ZM440.0,50.2L438.6,50.0L444.8,52.0L442.6,51.9L445.3,52.0L444.8,52.2L444.7,52.5L444.1,52.0L447.0,52.8L450.5,53.1L450.5,52.1L452.9,52.0L447.7,51.2L446.9,51.0L449.3,50.0L447.0,49.0L450.3,49.0L449.9,46.9L450.3,47.4L449.6,46.4L452.1,46.8L448.8,44.9L450.5,46.2L451.8,45.0L452.0,45.2L453.5,43.7L456.6,43.8L455.1,44.2L460.8,43.0L458.8,42.2L459.4,43.8L456.4,41.9L462.2,43.6L457.5,42.2L466.8,41.9L471.1,41.7L468.7,42.9L475.4,42.4L469.7,41.5L470.3,42.8L465.8,40.8L466.9,41.3L465.4,42.0L466.8,41.0L461.6,41.7L461.7,42.8L459.9,43.3L459.1,42.4L461.7,41.9L459.9,43.0L451.2,41.6L453.9,43.5L454.9,42.9L457.7,42.1L452.2,44.5L451.0,44.1L453.2,43.0L448.6,43.3L446.3,43.5L449.6,43.4L447.0,44.7L444.4,44.2L446.8,45.3L443.0,46.9L444.5,46.9L442.6,48.1L441.2,48.3L441.2,48.7ZM516.1,37.7L516.9,37.7L518.8,38.0L521.8,37.7L521.5,37.7L520.1,36.2L520.1,38.0L522.7,36.0L524.8,36.8L529.3,37.5L526.5,36.6L531.4,37.0L527.1,38.9L527.8,37.2L531.1,37.3L532.7,38.3L532.7,38.6L533.6,38.4L532.7,38.0L526.8,39.6L525.8,38.6L528.0,38.7L526.9,38.4L524.8,39.4L522.2,39.5L520.6,38.1L523.6,39.7L522.5,39.7L517.2,38.9L512.2,38.5L517.5,39.6L516.1,38.6ZM517.8,35.6L518.8,35.2L518.6,35.0L522.8,36.0L523.0,34.6L523.1,34.2L521.1,34.0L518.9,34.2L520.6,35.2L519.6,36.0L521.3,35.2ZM589.5,43.8L588.1,43.9L592.8,42.9L599.0,43.0L595.2,42.5L591.4,42.6L598.2,43.9L596.0,42.2L595.4,43.0L597.4,44.2L600.0,42.9L599.6,43.8L601.3,43.3L602.5,42.3L605.0,43.6L607.5,43.3L608.1,44.8L602.1,44.4L607.6,43.3L603.3,45.1L610.5,44.3L609.6,44.6L610.1,44.0L605.0,44.9L604.8,45.2L605.3,43.6L601.9,43.7L602.1,44.8L601.7,45.0L601.0,45.3L604.8,44.9L595.9,44.5L595.6,44.2L591.0,46.2L596.7,44.1L595.8,44.1L593.0,45.0L593.8,45.8L588.8,43.6L592.4,44.1ZM594.7,47.1L596.7,46.3L591.9,47.8L599.7,47.4L597.6,47.9L600.0,47.3L598.1,47.1L598.7,47.3L597.1,46.8L596.5,47.8L589.3,46.8ZM598.2,80.6L598.6,81.6L599.5,82.2L600.5,82.9L600.8,84.2L600.4,85.6L600.9,86.7L600.8,88.1L600.1,88.9L600.0,89.5L600.1,91.1L600.7,92.6L600.8,94.2L599.4,94.5L598.6,95.1L598.3,93.9L598.6,92.7L598.2,91.6L598.5,90.0L598.2,88.7L598.2,87.2L597.9,86.0L598.0,84.8L597.9,83.8L597.9,82.2ZM35.4,62.0L36.4,61.7L35.3,62.0L37.6,61.1L38.5,61.0L40.6,61.2L42.3,61.3L42.4,61.9L46.3,61.8L44.3,62.0L44.7,63.1L45.3,63.1L47.6,63.2L49.6,63.1L50.8,62.5L49.7,61.8L51.1,61.2L51.2,61.0L52.8,59.9L51.3,60.0L49.9,58.7L49.8,58.3L49.3,58.6L52.1,57.8L48.3,58.9L45.1,58.6L44.8,58.4L44.1,57.7L42.5,57.5L41.4,57.6L40.0,56.2L38.3,56.3L38.9,55.9L37.7,55.7L34.6,56.2L34.8,56.1L35.4,55.1L35.9,56.7L36.1,56.6L36.7,57.5L35.0,58.6L34.5,60.2L34.2,60.9ZM560.1,135.0L560.8,133.8L561.8,132.5L562.4,131.0L563.1,132.2L562.5,133.4L562.1,134.5L561.4,135.7L561.2,136.8L560.9,135.9ZM571.5,109.3L574.3,107.9L575.2,108.9L575.6,109.9L576.2,110.7L576.2,112.0L576.2,113.3L574.7,114.0L573.7,114.3L572.3,114.7L571.1,115.2L571.3,114.1L570.7,112.9L570.9,111.6L571.3,110.4ZM578.8,115.9L579.9,115.2L580.5,114.2L581.6,113.5L583.0,113.3L584.1,113.4L585.7,113.1L586.9,113.1L587.8,112.0L588.4,111.3L589.1,110.2L590.5,110.1L592.1,110.2L592.8,108.9L593.7,107.7L594.4,106.3L594.8,105.3L594.7,104.4L595.6,103.7L597.0,103.2L597.5,104.6L598.0,105.8L597.6,107.0L596.9,108.0L596.5,109.0L596.2,110.3L596.3,111.6L596.0,112.8L595.1,113.8L594.1,113.9L593.0,114.2L591.7,114.3L590.4,114.7L589.5,114.9L588.6,115.8L587.4,116.8L586.5,115.7L586.0,114.9L585.0,115.1L583.5,115.3L582.5,115.4L581.4,115.7L580.4,115.8L579.0,116.1ZM576.7,117.3L578.1,116.7L579.0,116.3L579.7,117.2L580.4,118.0L579.9,119.4L579.0,120.8L577.6,120.6L577.8,119.6L577.6,118.5ZM581.3,116.4L582.5,116.2L584.1,115.9L585.1,115.6L584.7,116.4L584.6,117.1L583.7,117.5L582.5,118.0L582.0,117.2ZM594.7,102.0L594.8,101.0L595.2,99.9L595.9,98.6L596.9,97.3L597.7,96.1L598.9,96.8L599.7,97.6L600.8,98.2L601.7,98.6L603.2,98.7L604.3,99.0L603.0,99.7L601.7,100.4L601.2,101.2L600.3,102.0L599.1,101.6L597.3,101.1L596.6,101.9L595.6,102.7ZM469.2,133.8L470.3,132.8L474.1,132.4L472.4,128.9L473.2,126.3L476.7,124.6L479.0,122.5L480.2,120.3L479.9,118.0L479.0,115.4L480.2,114.2L482.8,111.6L486.3,113.3L488.6,115.0L487.6,118.5L488.1,120.8L491.9,122.5L490.2,124.9L495.6,127.4L499.5,128.6L504.0,129.1L504.0,126.7L505.2,126.3L505.6,128.4L510.8,128.2L510.8,126.7L514.3,124.6L517.8,124.1L520.1,125.8L517.8,127.7L516.1,129.8L514.3,133.3L513.1,135.0L511.9,136.9L511.2,133.6L509.6,134.7L510.5,132.9L511.3,131.4L507.3,131.0L507.0,129.8L505.2,129.3L504.3,130.2L504.0,132.4L505.4,135.0L505.6,137.1L504.7,137.3L503.8,137.3L503.0,137.7L502.1,138.0L501.4,139.1L501.2,139.9L500.2,140.6L498.6,141.1L497.8,142.1L496.8,142.8L496.0,143.7L495.0,145.0L493.9,146.0L492.5,146.6L491.7,147.5L490.4,148.1L490.4,149.2L490.2,150.4L490.2,151.5L490.2,152.8L489.8,153.8L489.5,155.0L489.2,156.1L488.6,157.1L488.5,158.0L488.1,159.0L486.7,159.5L486.0,160.2L485.5,160.9L484.9,159.6L483.7,158.5L483.1,157.1L482.5,156.0L482.0,154.5L481.3,153.5L480.8,152.4L480.5,151.3L480.1,150.0L479.7,148.9L478.9,147.7L478.7,146.7L478.1,145.5L477.7,144.4L477.7,143.2L477.3,142.0L477.4,140.8L477.1,139.7L477.3,138.5L476.7,137.1L476.1,137.9L475.9,138.5L474.9,138.7L473.8,138.8L473.0,138.1L471.7,137.4L471.0,136.8L472.1,136.1L472.9,135.2L471.6,134.8L470.2,134.3ZM457.7,131.2L458.7,131.3L460.1,131.2L461.7,131.2L463.0,131.0L464.8,131.1L466.2,131.0L467.5,131.9L468.1,132.9L469.2,133.8L470.3,132.8L474.1,132.4L472.4,128.9L473.2,126.3L476.7,124.6L479.0,122.5L480.2,120.3L479.9,118.0L479.0,115.4L480.2,114.2L482.8,111.6L482.0,111.1L480.8,110.5L475.9,111.0L475.0,112.1L474.1,115.6L472.4,117.3L471.1,119.6L466.2,121.1L465.9,123.2L459.2,123.9L456.5,123.2L458.0,125.5L459.8,127.7L460.5,128.9L458.0,129.5ZM428.3,106.0L431.3,107.4L433.9,106.3L435.5,108.3L436.5,109.1L437.4,110.0L438.4,110.4L440.0,110.8L440.9,111.2L442.1,111.2L443.4,110.9L444.4,110.9L444.4,110.0L447.9,108.8L450.2,109.0L454.0,110.3L456.6,111.4L456.6,113.1L455.9,115.9L456.3,119.4L457.9,120.8L456.5,123.2L458.0,125.5L459.8,127.7L460.5,128.9L458.0,129.5L457.7,131.2L456.1,131.1L454.4,131.0L453.1,130.9L451.8,130.6L450.2,130.2L449.7,129.1L449.1,127.9L448.3,128.3L447.0,128.7L445.8,128.9L444.5,128.7L443.5,128.2L442.6,128.1L441.5,127.2L440.0,126.5L439.1,125.3L438.6,124.3L437.7,123.4L437.4,122.5L436.2,122.6L434.8,122.9L433.9,121.1L433.4,119.0L430.4,117.3L429.5,115.0L430.8,113.8L429.4,112.4L427.8,110.5ZM411.0,123.9L412.9,124.3L415.5,122.9L416.4,122.0L414.7,120.3L418.5,119.0L423.4,121.1L428.1,124.3L432.2,124.6L433.7,125.5L434.8,125.5L435.3,126.9L435.9,127.5L437.2,128.2L437.7,128.9L438.4,130.5L438.8,131.9L439.7,132.4L440.9,135.0L446.5,135.5L447.4,136.8L446.1,140.2L440.9,142.0L435.7,142.7L433.9,145.5L432.2,145.6L430.9,145.1L427.8,144.8L425.5,144.8L424.8,146.5L424.1,145.2L423.4,143.7L422.7,142.7L422.0,141.9L421.7,140.8L420.7,139.6L419.4,138.7L418.5,137.6L418.4,136.4L417.5,135.4L417.3,134.2L416.5,133.3L415.8,132.3L415.0,131.6L414.4,130.1L413.8,128.9L412.8,128.1L412.2,127.0L411.2,126.2L410.9,124.9ZM525.0,163.7L526.7,165.1L528.3,164.2L529.0,165.1L529.9,166.1L530.7,167.2L530.7,168.6L530.9,170.3L531.7,171.5L532.1,172.6L530.7,172.6L529.8,171.8L528.3,171.1L527.1,170.1L526.7,168.6L525.8,167.2L525.8,166.1L525.4,164.9ZM541.6,171.5L542.7,171.0L543.8,170.8L544.7,170.3L546.3,169.8L547.5,169.4L548.1,168.7L549.2,167.6L550.1,166.8L550.8,166.2L551.9,165.4L552.4,164.6L553.3,163.7L554.2,162.8L555.1,163.3L555.7,164.1L556.5,164.6L557.5,165.3L558.4,166.0L557.5,166.7L556.3,167.5L555.4,167.7L552.4,167.5L551.0,169.8L551.2,170.5L550.5,172.4L547.5,172.6L546.1,172.6L544.0,173.3L543.2,173.4ZM337.1,66.7L338.8,67.0L338.5,66.7L337.9,67.6L337.1,67.3ZM347.2,69.7L348.3,69.7L347.7,70.7ZM378.8,224.7L380.4,224.9L381.5,225.2L385.0,224.4L385.0,218.1L386.2,221.8L388.5,220.7L390.2,219.0L394.6,219.7L395.3,217.9L397.2,216.0L401.4,213.6L404.7,213.9L405.9,217.6L405.8,220.0L406.1,221.6L407.5,221.8L407.0,223.2L406.6,224.5L405.7,225.5L404.9,226.1L404.2,227.0L403.5,228.1L402.4,229.4L401.5,230.2L400.6,231.1L399.3,232.0L398.0,232.7L397.2,233.4L396.3,233.8L394.9,234.1L393.3,234.1L392.3,234.2L390.4,234.2L389.3,234.3L387.6,234.6L386.5,235.0L385.0,235.5L383.5,234.8L382.2,234.3L382.0,233.1L382.2,231.7L381.8,230.6L380.9,229.4L380.2,228.0L379.8,226.8L379.5,225.9ZM651.9,234.8L652.6,235.2L653.7,235.7L654.7,236.4L655.6,237.5L656.8,238.4L657.1,239.3L657.6,240.3L659.0,240.5L660.8,240.5L662.0,240.5L661.1,241.9L660.8,243.1L659.4,243.7L659.0,244.5L659.0,245.2L658.2,245.9L657.5,246.7L656.4,247.3L655.4,246.8L655.5,245.6L656.1,244.5L655.0,244.0L653.8,243.3L654.6,242.5L655.2,241.9L655.3,240.6L655.4,239.3L654.7,238.2L653.9,237.2L652.8,236.2L652.3,235.6ZM651.9,245.4L653.3,245.9L654.7,246.6L654.3,248.0L653.8,248.8L652.7,249.6L652.1,250.4L652.4,251.3L650.6,251.8L649.4,252.0L649.0,253.5L648.4,254.8L647.1,255.1L646.3,255.5L645.4,256.0L644.3,255.6L642.8,255.3L641.8,255.1L641.0,254.6L642.1,253.5L642.8,252.7L644.0,251.8L645.3,251.1L646.9,250.3L648.0,249.7L648.9,248.8L649.4,247.6L650.2,246.8L650.8,245.9Z"/>
<path fill="#388a3b" d="M346.9,99.6L347.2,98.1L347.6,96.6L347.9,95.1L346.9,94.2L346.6,93.5L345.6,92.8L344.5,92.4L343.0,92.1L341.8,91.6L342.1,90.5L343.6,90.6L344.7,90.5L346.0,90.3L347.2,90.4L346.7,89.5L346.9,88.6L348.0,88.6L349.0,88.9L350.3,89.0L351.2,88.1L352.2,87.3L352.8,86.5L353.7,86.4L354.4,86.2L357.3,88.1L360.1,89.0L361.3,89.3L363.1,89.6L364.3,89.8L363.3,92.3L360.5,94.4L362.2,95.2L361.7,96.6L363.3,98.9L361.9,99.5L360.8,100.1L359.2,99.8L357.9,99.6L356.6,99.7L355.4,100.1L355.6,101.3L352.6,101.1L349.1,100.6ZM365.0,101.3L365.8,100.8L366.4,100.3L366.3,101.3L366.6,102.2L366.1,103.0L365.2,102.4ZM346.9,99.6L349.1,100.6L352.6,101.1L355.6,101.3L355.4,102.4L354.3,102.8L353.0,103.2L351.4,103.7L350.6,104.7L350.3,105.3L349.5,106.3L350.2,107.6L349.7,108.7L348.8,109.5L347.7,110.3L346.5,111.0L345.1,111.0L343.8,111.2L342.1,111.2L341.2,111.7L340.2,112.4L339.6,111.8L339.0,111.4L338.0,110.8L337.1,110.3L337.8,108.6L337.2,106.3L337.9,105.1L338.1,102.9L339.2,102.7L335.7,102.0L334.6,102.2L334.0,101.3L333.7,100.3L334.8,99.8L336.0,99.0L337.7,99.1L338.8,99.0L340.4,99.2L341.7,99.2L342.5,99.3L343.9,99.4L345.2,99.6ZM354.2,106.2L355.3,105.9L355.9,105.8L355.2,106.7ZM363.3,98.9L361.7,96.6L362.2,95.2L364.9,94.5L368.4,93.5L371.3,93.3L373.9,94.2L373.9,95.7L372.6,96.1L371.5,96.3L371.4,97.2L371.7,98.2L372.9,98.7L373.8,99.4L374.3,100.3L374.8,101.3L376.0,101.5L376.8,101.9L378.0,102.2L379.0,102.9L380.2,103.8L381.0,104.5L382.3,105.3L382.0,105.8L381.0,105.1L379.7,104.6L379.1,105.3L378.8,106.0L379.3,106.6L379.9,107.2L378.7,108.2L378.0,109.1L377.3,108.6L377.4,107.5L378.0,106.3L377.3,105.5L376.4,105.0L375.2,104.4L374.0,103.8L372.7,103.4L372.1,102.9L370.9,102.1L370.1,101.5L369.3,100.9L368.4,100.3L368.2,99.4L367.5,98.5L366.5,98.2L365.4,97.8L364.1,98.3ZM371.7,109.0L372.9,108.7L374.4,108.6L376.1,108.4L377.3,108.4L376.6,109.8L376.4,111.2L375.5,110.8L373.9,110.5L373.1,110.1L371.9,109.7ZM364.3,103.7L365.6,103.8L366.8,103.7L366.6,105.3L366.8,106.9L365.7,107.1L364.7,107.2L364.6,106.1L364.4,104.8ZM355.9,85.7L356.8,85.1L357.3,84.6L358.2,83.6L358.4,82.9L359.6,82.5L361.2,82.2L362.2,82.2L360.5,85.0L360.7,86.5L358.7,85.7ZM354.4,86.2L355.1,85.8L355.9,85.7L358.7,85.7L360.7,86.5L360.7,86.9L361.0,89.0L360.1,89.0L357.3,88.1ZM360.5,94.4L363.3,92.3L366.8,92.4L368.4,93.5L364.9,94.5L362.2,95.2ZM322.4,125.8L323.3,126.0L322.7,126.7Z"/>
<path fill="#276b27" d="M103.5,54.0L103.5,70.2L107.9,70.7L110.5,72.5L114.0,71.6L116.6,73.3L119.3,75.9L122.8,77.7L122.8,79.1L122.3,80.1L122.8,81.1L123.7,82.1L124.9,82.7L126.3,83.8L126.5,85.0L127.1,86.4L128.3,86.9L129.8,87.6L131.5,88.1L132.5,88.6L133.7,89.2L135.0,89.8L183.9,89.8L184.3,89.3L189.2,90.9L194.4,91.6L195.5,91.1L202.3,94.2L205.8,96.3L206.0,100.3L204.9,102.0L211.9,100.4L211.9,99.4L216.3,98.5L218.9,96.8L225.0,96.8L226.8,95.1L229.0,92.6L231.1,92.8L231.5,95.6L232.9,96.8L233.9,96.7L234.6,96.4L235.7,96.1L236.7,95.9L236.2,97.0L235.1,97.9L234.6,99.0L235.8,98.7L237.1,98.0L238.1,97.7L239.4,97.4L240.7,96.9L242.0,96.6L243.4,96.3L244.5,95.7L245.1,95.1L244.8,94.3L244.2,93.3L243.2,94.4L242.5,95.4L241.2,95.1L239.9,95.1L238.4,94.8L237.3,94.7L236.8,93.5L236.4,92.4L237.0,91.5L237.3,90.7L236.1,90.3L234.6,89.8L233.7,90.0L232.3,90.3L231.1,90.7L229.9,91.6L228.6,92.5L227.6,93.3L227.0,93.6L225.9,93.7L226.9,92.8L228.2,91.8L229.4,90.7L230.7,90.2L232.0,89.6L232.9,89.0L234.2,88.6L235.4,88.0L236.4,87.8L237.9,87.9L239.0,87.8L240.5,87.8L242.1,87.8L243.4,87.8L244.9,87.0L246.2,86.5L247.7,86.0L248.6,85.6L250.2,85.2L251.2,84.6L252.3,83.9L252.6,82.9L251.5,82.3L250.7,81.7L249.5,81.1L248.3,80.8L247.4,80.0L246.1,79.6L245.1,79.1L243.8,78.2L243.0,77.4L242.5,76.8L241.8,75.5L241.6,74.2L241.4,72.8L239.5,72.0L237.9,71.4L237.3,70.2L236.2,71.0L235.5,71.6L233.1,72.2L232.5,73.1L231.1,73.3L230.6,72.8L228.6,73.1L227.6,72.5L227.7,71.4L227.7,70.3L228.5,69.0L224.8,68.6L227.4,67.7L224.1,67.6L223.4,67.0L223.1,66.8L220.9,67.4L220.6,66.7L220.6,66.5L220.6,66.7L218.4,66.6L216.0,66.1L214.5,66.5L214.5,66.5L212.9,67.8L213.5,68.0L212.8,69.3L213.9,70.3L214.5,71.6L214.5,72.5L212.8,73.0L214.2,73.7L214.5,75.2L215.7,75.6L216.3,76.8L214.7,77.5L214.2,78.3L213.0,79.0L211.9,79.8L211.3,81.2L211.1,82.5L211.3,84.2L211.0,85.5L209.2,84.9L208.4,84.4L206.7,83.8L206.8,82.3L206.0,80.8L205.8,79.4L204.0,79.0L203.1,78.9L201.4,78.9L200.4,78.3L198.2,78.0L198.1,77.1L196.2,76.8L194.3,76.5L193.5,76.3L191.0,76.4L189.2,75.9L188.3,75.9L187.7,75.1L185.6,73.6L184.8,72.8L184.9,71.3L184.3,70.7L186.4,70.3L187.0,68.6L186.8,67.8L188.3,67.2L188.7,66.9L190.5,65.5L191.9,64.8L191.8,64.6L193.9,64.9L193.2,63.9L195.6,63.6L196.2,63.8L195.9,62.5L198.8,62.0L197.6,61.8L199.2,60.8L199.7,60.3L201.3,60.0L200.7,58.4L199.4,58.2L203.2,57.7L201.6,57.0L201.2,56.4L205.2,56.5L205.6,56.0L207.5,55.9L205.3,54.5L207.3,53.7L206.7,53.7L206.4,53.6L206.0,54.3L199.2,52.8L200.6,54.4L201.4,53.7L205.9,55.2L197.2,55.2L203.6,56.5L199.7,56.8L198.2,57.0L198.5,57.3L198.1,57.4L196.2,57.7L196.0,57.4L194.2,57.6L191.9,55.9L192.7,55.9L191.3,54.8L191.9,54.3L190.9,54.2L191.1,52.7L191.1,53.8L188.8,53.0L189.1,51.5L188.2,51.6L185.7,50.2L186.9,49.9L187.2,52.5L179.1,52.5L181.2,53.5L182.2,53.3L183.7,55.1L180.7,55.9L180.5,56.2L182.2,56.8L181.8,57.1L180.5,56.5L179.2,56.4L177.8,57.2L176.9,57.4L176.2,56.5L174.7,57.6L171.6,57.7L171.8,56.5L171.7,57.2L169.2,57.4L170.0,56.6L168.8,57.0L166.5,56.8L166.5,56.8L165.3,57.4L163.4,56.5L162.3,56.7L161.6,57.8L161.2,57.7L158.8,57.8L159.4,57.5L157.9,56.4L157.7,56.8L155.0,56.2L155.2,57.1L158.0,56.2L149.3,56.5L153.5,57.3L153.3,56.9L150.7,56.5L148.3,56.6L148.1,56.3L146.6,54.6L147.2,55.1L148.1,55.3L146.7,54.9L142.3,54.1L143.8,53.6L141.8,53.9L142.1,53.8L135.3,53.6L138.5,53.7L137.3,54.2L136.7,54.4L133.3,53.5L133.4,54.5L134.3,52.5L133.4,53.8L131.5,53.3L128.8,52.6L132.8,52.4L126.8,52.1L131.1,53.7L126.3,52.8L124.3,53.8L123.4,54.1L124.1,53.1L123.0,52.6L121.0,53.7L119.2,53.1L120.7,53.8L117.8,54.9L115.6,55.3L115.8,54.6L113.7,55.1L114.9,53.9L107.6,54.9L110.8,55.6L110.5,55.1L108.5,55.7L112.5,55.4L111.7,54.3L106.3,55.1L103.2,54.1L103.2,54.6ZM242.5,59.4L241.4,59.6L241.0,60.2L241.6,61.3L239.2,61.8L238.1,62.0L236.5,62.8L236.8,63.1L235.0,64.5L234.9,65.2L234.6,65.5L234.4,65.9L232.5,66.3L231.3,66.2L230.3,66.4L228.7,66.3L228.7,65.4L226.9,64.9L226.0,65.2L225.9,64.6L225.3,64.3L224.8,63.7L219.9,63.3L222.1,63.2L220.6,62.9L219.6,62.8L217.6,63.3L217.6,62.8L213.7,63.1L215.8,63.1L211.8,63.0L213.7,62.9L213.4,62.5L214.4,61.6L215.4,61.2L216.9,60.6L218.1,60.9L218.6,60.5L218.8,60.2L218.6,60.6L221.5,60.3L223.0,58.8L221.2,58.8L223.1,57.9L222.4,56.8L223.0,56.9L220.4,55.3L220.0,55.9L216.7,54.8L219.0,54.9L215.3,54.1L215.4,53.7L216.1,54.0L212.0,52.8L208.6,53.3L211.9,53.3L209.0,53.4L212.6,53.9L206.9,53.0L202.1,54.1L207.8,53.6L201.7,52.6L204.4,53.8L202.4,53.8L197.4,53.9L201.4,53.3L197.2,52.5L201.7,53.7L199.7,52.2L198.0,52.0L195.5,51.5L195.8,50.8L194.4,51.6L192.6,50.8L191.2,50.1L190.8,49.5L192.7,48.1L200.1,48.0L195.0,48.1L201.7,46.6L196.3,47.9L199.3,47.9L201.4,48.0L201.2,46.4L201.4,46.7L209.0,47.1L203.9,45.8L205.0,46.4L207.7,46.2L202.6,46.5L207.3,46.0L207.2,46.4L210.2,46.7L208.6,46.4L215.4,46.5L215.1,48.7L216.9,47.5L215.4,48.5L214.7,48.8L215.9,48.4L216.4,48.2L221.9,49.9L222.5,50.2L221.7,48.9L224.0,50.1L222.4,49.5L224.1,50.9L225.9,50.7L228.1,50.6L227.0,52.2L231.0,52.4L235.6,53.3L231.1,52.8L233.7,53.7L233.8,54.6L232.9,55.1L229.6,56.2L235.9,55.7L235.8,56.3L240.0,57.3L239.0,57.1L238.8,56.5L239.9,57.7L239.3,58.3L240.5,59.5ZM173.5,55.1L171.0,54.4L167.5,55.1L171.7,54.7L168.0,54.9L168.7,55.9L163.8,55.0L166.5,55.9L168.6,55.2L163.3,55.2L166.6,56.4L161.3,56.0L161.5,55.0L159.5,55.2L163.1,55.4L157.7,55.8L155.6,55.2L159.5,55.4L156.4,54.9L154.6,54.5L153.8,55.8L152.6,55.1L149.3,55.2L153.6,54.9L148.1,54.6L150.4,55.1L147.5,54.7L142.7,52.9L144.5,53.5L143.7,52.5L144.9,51.0L143.4,50.9L143.7,49.5L145.5,49.0L144.3,49.9L145.1,47.6L149.6,48.2L151.4,47.0L150.7,47.6L152.6,48.2L155.0,47.8L154.2,47.4L153.8,46.5L153.1,48.0L158.3,48.2L159.5,48.8L157.4,47.2L166.3,47.9L161.2,47.8L161.6,49.0L164.2,48.5L162.6,47.0L163.1,47.6L166.5,48.1L164.8,49.8L167.9,50.3L169.1,51.0L167.3,51.6L167.2,52.5L168.7,51.8L173.0,51.8L170.7,53.4L170.4,52.7L173.5,53.3L172.8,54.6ZM148.1,48.1L147.5,47.6L147.1,48.2L144.7,48.4L141.9,49.2L137.2,50.7L142.0,50.7L141.5,51.6L140.3,50.1L142.1,50.3L132.5,50.2L137.8,50.1L137.1,50.6L135.0,51.3L134.9,50.4L131.3,49.7L132.4,50.7L130.6,49.9L125.9,48.7L131.5,47.9L132.6,47.1L132.4,46.4L136.1,47.1L140.6,44.9L134.5,46.5L134.6,45.2L139.7,45.3L138.5,45.5L140.3,44.5L141.0,44.9L142.1,46.9L141.9,45.2L140.6,45.5L138.4,45.7L145.5,46.0L148.6,47.0L147.7,46.6ZM243.4,31.8L241.5,32.2L242.6,31.1L240.7,32.0L239.5,31.8L242.3,30.6L236.1,31.5L236.8,29.8L234.6,30.7L233.6,30.2L231.2,30.3L232.4,31.1L232.1,31.3L227.7,31.6L227.3,29.9L232.6,29.6L223.4,31.0L220.1,31.8L227.9,30.7L224.4,31.5L222.1,29.6L221.9,29.8L218.9,30.6L215.9,30.5L217.1,29.6L217.2,30.7L212.8,31.1L214.8,31.7L214.5,31.0L214.3,30.8L211.0,31.9L211.1,30.2L205.6,30.6L206.7,31.1L207.2,32.3L205.0,30.9L205.2,32.2L201.6,31.4L195.5,30.5L206.4,31.0L197.0,32.5L197.7,32.2L195.1,31.2L196.2,32.1L202.0,31.3L196.6,31.9L190.5,32.6L195.8,33.7L186.0,32.1L190.1,33.5L191.9,34.0L193.7,32.8L195.8,34.3L194.9,32.9L193.2,33.6L199.0,34.3L197.9,34.0L195.2,33.5L201.9,34.7L202.9,34.3L205.5,33.4L204.5,34.3L202.1,34.0L210.9,34.0L207.0,33.9L205.0,35.3L212.7,35.2L210.7,34.0L209.3,34.7L211.9,34.4L212.2,34.3L207.1,35.1L209.2,34.3L209.8,34.6L208.9,34.6L207.2,35.0L204.8,35.3L207.0,34.9L202.1,34.0L200.9,34.2L199.7,35.3L197.4,35.2L198.2,36.6L195.5,35.5L198.2,36.7L194.4,36.3L191.1,37.1L195.8,35.4L190.4,37.3L199.2,36.6L201.8,37.6L206.8,37.8L201.4,36.8L201.9,37.1L202.0,37.2L209.3,36.9L204.7,37.2L203.2,36.1L209.7,36.2L202.3,37.4L209.8,36.6L213.4,37.7L213.1,38.1L208.8,37.5L213.9,36.6L215.4,37.0L211.6,38.2L213.5,38.1L214.4,38.0L209.9,36.2L207.6,38.5L209.8,37.8L210.4,37.1L205.2,37.5L203.7,38.4L204.3,36.9L203.2,38.0L199.8,38.2L202.6,37.5L201.8,39.2L197.0,39.6L198.6,38.2L198.4,38.9L196.2,38.9L198.7,39.9L200.3,40.0L199.9,38.5L202.6,41.0L201.4,40.1L201.0,39.3L208.8,39.1L203.1,40.2L208.5,40.9L209.0,40.8L207.7,40.2L208.9,40.7L210.2,40.5L211.5,40.6L206.5,40.0L205.0,39.9L206.2,40.6L204.3,41.6L209.7,41.3L203.9,41.9L201.4,41.2L201.1,40.9L197.5,41.1L199.1,41.8L197.9,42.0L197.1,43.2L200.9,41.7L200.3,42.1L201.6,41.4L204.4,42.8L204.9,42.2L208.4,42.9L208.8,43.2L210.3,41.8L209.7,42.0L210.2,42.6L211.9,42.3L214.6,42.6L213.4,42.2L213.7,41.2L213.1,41.1L217.1,40.0L214.4,40.0L219.6,39.0L216.9,38.7L218.9,38.6L226.5,39.2L222.4,37.3L224.6,38.3L223.2,36.6L224.1,36.5L230.0,35.5L229.0,36.3L228.4,35.4L228.8,36.2L229.9,34.6L232.2,36.3L233.8,34.4L226.3,35.1L239.0,35.0L236.3,34.5L236.4,34.2L238.4,34.9L238.5,32.7L241.1,33.9L241.5,32.9L239.7,33.3L242.2,33.7L243.4,32.5ZM210.2,45.2L213.0,46.1L207.9,45.5L203.2,45.4L208.4,46.2L203.0,46.4L203.6,44.5L200.4,45.1L201.1,46.7L198.9,44.3L199.7,45.5L197.0,46.5L203.0,46.2L197.2,44.3L197.3,46.0L195.4,44.8L191.9,45.5L186.3,46.0L192.4,45.4L191.9,45.2L189.2,45.2L193.4,44.0L188.7,44.9L188.6,44.2L186.2,42.9L189.3,42.9L183.9,42.4L186.7,41.5L188.6,41.8L192.5,41.1L186.1,41.0L183.9,42.9L191.1,41.6L192.1,42.7L192.7,41.5L192.0,41.0L196.4,41.6L193.3,41.9L191.6,41.0L196.4,41.7L194.0,42.6L201.1,41.3L195.0,41.6L202.7,43.3L201.1,42.6L207.7,42.3L204.1,42.8L206.7,42.9L208.6,44.1L206.6,44.2L208.0,44.4ZM197.9,37.7L198.4,37.7L195.2,37.3L189.0,37.2L194.5,39.6L192.0,38.7L194.0,39.5L190.9,38.9L192.0,38.8L191.1,37.5L188.2,37.6L187.3,36.8L185.0,37.3L179.6,37.5L183.9,36.8L186.7,36.6L184.2,35.9L185.5,35.8L187.4,34.2L190.6,33.3L189.7,34.3L188.4,35.8L190.7,35.6L192.0,34.4L194.6,34.2L194.9,34.5L196.2,35.1L199.1,35.8L198.6,37.3ZM164.7,43.3L166.2,42.9L162.4,44.5L160.7,44.4L159.1,45.3L160.8,44.9L158.7,45.5L157.7,45.0L159.0,44.2L156.5,45.7L154.3,45.3L153.6,43.8L154.8,45.1L149.9,45.0L148.1,44.2L149.0,44.7L146.5,45.4L142.6,43.6L145.3,44.4L145.5,42.9L147.8,41.7L147.9,43.5L150.4,42.6L151.0,41.5L151.4,43.1L154.3,42.4L155.6,41.8L154.2,42.0L152.7,42.9L152.5,42.2L155.0,42.8L160.7,43.2L159.3,41.9L159.9,42.6L161.2,42.0L160.5,43.2L164.3,41.9L161.5,42.8ZM187.4,49.9L187.5,49.2L189.6,50.0L185.8,49.3L182.3,50.6L182.2,50.7L179.8,50.6L177.6,50.1L177.7,50.0L181.8,49.4L175.1,51.1L176.5,49.2L173.1,50.0L173.5,49.9L173.5,49.4L177.6,49.3L173.5,47.3L172.9,46.8L177.8,47.5L177.4,47.5L176.5,45.7L181.0,47.6L182.1,47.4L180.4,46.4L188.3,46.4L181.4,46.0L181.9,45.5L186.5,47.0L183.8,46.6L186.6,45.7L187.4,46.4L189.3,46.8L192.8,49.2L185.6,49.3ZM209.3,63.8L208.2,64.5L207.2,64.1L206.6,64.5L204.9,65.2L202.8,64.9L202.2,64.4L200.3,65.0L200.5,64.1L199.7,64.3L199.6,63.5L199.5,62.4L197.9,61.7L199.6,61.7L198.8,61.7L202.3,61.0L200.9,60.3L203.2,60.3L202.9,60.3L204.3,60.9L206.3,61.9L208.0,61.5L208.4,62.0L209.3,63.1ZM246.3,91.9L247.7,92.4L249.0,92.7L250.8,93.2L252.1,93.7L253.5,93.7L254.7,93.8L256.1,93.9L257.4,93.8L257.5,93.0L257.9,92.3L257.2,91.3L256.5,90.5L254.9,89.9L253.8,89.1L252.5,88.4L252.6,87.0L253.0,85.5L251.6,85.8L250.4,86.4L249.5,87.7L248.6,89.0L248.2,89.8L247.0,90.4L246.3,91.2ZM125.7,86.9L126.9,87.7L128.2,88.8L129.4,89.6L130.6,90.5L132.1,90.7L132.9,90.6L134.1,90.9L133.3,89.8L132.4,88.7L131.5,87.8L129.9,87.4L128.7,87.3L126.9,87.0ZM182.2,44.7L182.4,43.7L181.2,44.0L178.0,45.6L172.8,44.1L179.1,44.7L179.1,44.8L175.2,44.7L172.1,44.4L171.6,43.5L171.6,43.6L170.8,43.3L170.0,42.9L172.2,42.7L167.8,42.6L170.8,42.0L173.6,42.6L175.2,41.2L178.2,41.8L176.6,40.8L174.8,41.1L178.2,41.9L179.1,42.6L174.5,43.0L182.2,42.0L181.6,44.1L183.3,44.9ZM157.7,40.3L156.8,39.3L155.6,40.7L155.8,40.6L157.6,41.0L155.0,40.9L151.0,39.7L150.7,40.0L144.7,41.0L147.9,39.5L144.0,39.7L147.2,40.7L154.6,39.3L149.8,38.6L152.3,39.3L150.1,39.5L152.5,38.6L153.5,38.8L150.1,39.7L155.7,39.7L157.4,38.9L157.7,38.9L159.8,40.3ZM178.7,39.4L179.7,38.7L178.1,40.4L177.1,38.8L167.4,39.8L172.1,39.2L172.0,39.9L172.7,38.7L170.0,39.1L167.3,38.7L173.9,37.5L165.7,38.8L166.5,37.7L164.3,38.7L171.0,37.7L167.6,37.8L173.5,36.1L173.0,36.7L172.0,35.9L173.4,37.0L175.2,36.0L177.9,35.2L175.6,36.7L177.8,36.0L177.7,36.6L180.4,37.7L178.1,38.4L181.1,38.3ZM120.1,81.3L119.1,81.2L117.5,81.0L117.7,82.0L118.8,83.0L119.3,83.8L120.3,84.0L121.0,84.3L120.9,82.8ZM340.0,88.1L341.6,87.9L342.9,87.8L343.9,87.6L345.4,87.3L346.8,87.1L347.9,86.9L349.2,86.7L351.0,86.3L352.3,86.2L350.9,85.5L351.7,84.3L353.0,83.4L351.4,83.2L350.5,82.9L349.8,82.0L349.7,81.1L348.4,80.1L347.4,79.4L346.5,79.0L346.5,78.0L344.8,79.4L344.6,80.1L344.8,81.1L344.8,82.2L344.8,84.6L345.3,85.3L343.9,85.8L342.7,86.2L341.9,86.8L340.9,87.4ZM360.5,85.0L362.2,82.2L363.5,81.6L365.0,81.3L364.6,80.3L365.0,79.6L366.6,79.7L367.5,80.5L368.0,81.0L369.2,81.1L370.6,80.9L371.9,80.5L372.9,81.1L374.8,81.3L375.5,83.8L376.2,86.4L375.0,86.4L371.3,87.6L374.1,90.4L372.7,92.4L368.4,92.6L366.8,92.4L363.3,92.3L364.3,89.8L363.0,89.6L362.4,89.4L361.0,89.0L360.7,86.9L360.8,85.9ZM478.8,106.3L479.4,105.1L484.2,103.9L487.2,102.9L490.4,101.8L490.4,100.6L489.8,96.8L493.9,95.9L495.1,93.0L499.8,93.0L502.6,89.5L503.8,89.5L503.8,90.7L508.5,93.3L509.1,96.4L516.9,98.2L518.7,100.6L526.5,101.0L533.5,102.5L542.3,100.8L545.4,99.0L549.3,96.8L553.6,94.5L559.4,93.8L555.4,92.1L552.4,91.6L554.0,88.3L555.9,88.8L559.4,84.6L561.2,82.4L565.9,82.0L570.2,83.2L572.9,88.1L578.6,90.2L581.6,91.9L585.5,91.2L582.5,96.4L579.3,96.8L579.0,99.4L578.5,101.5L576.9,100.3L573.7,102.0L571.6,102.5L567.3,105.5L565.6,106.2L564.1,106.5L562.9,107.2L562.4,105.8L562.4,104.6L563.3,104.1L562.0,104.8L560.5,105.6L559.2,106.2L558.0,106.9L556.6,107.4L555.7,107.7L556.5,108.6L557.5,109.3L558.0,110.2L559.3,109.8L560.0,109.6L561.2,109.3L562.9,109.8L564.1,110.3L563.2,111.1L561.7,111.6L560.6,112.3L559.6,113.3L558.5,114.2L559.7,115.3L560.1,116.4L561.2,117.6L562.3,118.6L562.9,119.7L563.0,121.0L563.1,122.0L563.1,123.1L562.9,124.4L562.4,125.5L561.3,126.6L560.7,127.8L559.8,128.9L558.8,130.0L558.1,131.1L557.1,132.1L556.0,132.8L555.2,133.5L554.5,134.2L553.3,134.7L552.1,135.2L550.7,135.8L549.6,136.2L548.6,136.7L547.5,136.8L546.3,137.3L544.9,137.6L543.9,138.7L542.8,139.7L542.6,138.6L541.8,137.6L540.3,137.6L538.8,137.5L536.5,135.4L533.5,134.7L528.8,135.9L527.1,138.2L525.6,137.8L524.8,137.3L523.1,136.4L522.7,133.3L520.6,132.8L522.5,129.8L522.2,126.7L520.1,125.8L517.8,124.1L514.3,124.6L510.8,126.7L505.6,127.2L505.2,126.3L503.7,126.4L502.7,126.5L501.7,126.4L500.3,126.3L496.0,124.3L491.9,122.5L488.1,120.8L487.6,118.5L488.6,115.0L486.3,113.3L482.8,111.6L481.7,111.0L480.8,110.2L480.8,108.1ZM540.0,141.6L540.9,140.8L541.8,140.1L543.0,140.4L544.0,140.8L543.2,142.0L542.3,143.2L541.3,142.4ZM549.6,212.9L550.8,212.4L551.7,211.8L552.9,211.4L554.0,210.8L555.0,210.5L557.0,210.2L558.0,209.8L559.4,209.4L560.5,209.2L561.5,209.1L562.0,208.3L562.8,207.3L563.8,206.5L563.5,205.5L563.6,204.5L564.7,204.9L566.1,205.2L566.5,204.3L566.8,203.2L568.0,202.6L569.0,201.8L569.8,201.0L570.5,200.1L571.6,199.3L572.9,200.0L573.7,200.7L575.2,200.7L576.4,200.9L576.4,199.8L576.7,198.5L577.2,197.5L578.3,196.6L579.2,196.3L580.6,196.1L581.6,195.9L581.8,194.5L583.0,195.1L584.7,195.6L586.0,196.2L587.7,196.1L589.1,195.9L588.3,197.0L587.7,198.1L587.2,199.6L586.9,201.1L588.3,201.6L589.1,202.4L590.4,203.2L591.2,203.8L592.3,204.7L593.3,205.4L594.8,205.3L596.1,205.2L596.7,203.9L597.1,202.5L597.5,201.1L597.6,199.7L597.7,198.6L597.7,197.2L598.0,196.1L598.7,194.7L599.1,193.6L599.6,194.7L600.1,196.0L600.8,197.2L601.2,198.8L601.4,200.0L602.9,200.6L604.0,201.1L604.4,202.3L604.8,203.8L605.2,205.3L605.5,206.6L605.6,207.8L606.7,208.4L608.1,209.0L608.8,209.6L610.1,210.3L611.2,211.6L611.9,212.6L612.5,213.9L613.6,215.0L614.3,216.1L615.3,217.2L616.2,218.1L617.4,219.3L617.8,220.6L618.0,221.8L618.2,223.2L618.5,224.5L618.1,225.8L617.5,227.5L617.4,228.9L616.9,230.1L615.8,231.2L614.9,232.6L614.5,233.7L614.1,235.0L613.3,236.0L613.2,237.2L612.5,238.4L612.3,239.4L612.0,240.2L610.7,240.5L609.4,241.1L607.8,241.4L606.6,242.0L605.7,243.0L604.9,242.5L603.3,241.9L602.6,241.4L601.4,241.8L600.0,242.3L598.6,241.9L597.3,241.4L595.6,241.0L595.1,239.9L594.2,238.7L593.8,237.6L592.8,236.8L592.3,235.9L591.6,235.0L591.2,233.7L591.2,232.4L590.9,231.7L590.4,232.8L589.5,234.1L588.6,234.9L587.7,235.7L586.5,235.0L585.8,234.0L584.9,233.1L584.6,232.0L583.5,231.5L582.0,230.7L580.9,230.3L579.9,229.7L578.3,230.0L576.8,229.9L575.5,230.1L574.4,230.4L572.9,230.6L571.3,230.8L570.2,231.1L569.1,231.7L568.0,232.2L566.8,232.7L565.9,233.9L564.2,234.0L563.1,234.0L561.4,234.0L559.8,233.9L558.9,234.5L557.4,235.2L556.3,235.8L554.9,235.9L554.0,235.6L552.8,235.7L552.1,235.1L551.0,234.6L551.6,233.3L551.7,232.0L552.2,230.6L551.4,229.0L551.0,227.7L550.6,226.2L549.9,225.1L549.6,223.7L548.8,222.6L548.3,221.4L548.0,220.2L548.2,218.8L548.4,217.6L548.6,216.5L548.7,215.5L548.7,214.3L548.9,213.6ZM602.9,245.9L604.4,245.8L606.1,246.0L607.6,246.0L609.1,246.1L609.3,247.4L609.1,248.5L608.0,249.7L607.0,250.6L605.9,250.7L605.2,250.6L604.8,249.6L603.8,248.5L603.2,247.2Z"/>
<path fill="#1a5418" d="M103.5,54.0L99.1,54.9L99.0,52.9L97.6,53.4L101.2,54.4L97.7,52.6L92.4,53.5L96.5,53.3L96.2,52.2L95.9,52.4L95.0,52.5L91.6,52.0L90.2,52.3L92.1,53.4L89.7,52.6L87.8,52.5L88.4,53.2L90.0,52.5L86.0,52.0L83.4,52.8L82.7,52.2L74.9,51.8L77.7,50.9L79.6,51.4L77.7,51.6L76.4,51.1L70.6,51.5L73.1,51.7L72.1,51.3L70.1,50.9L73.2,52.4L70.3,52.3L70.8,53.6L67.9,52.6L63.8,54.1L68.6,54.8L65.1,54.2L65.8,55.3L63.4,55.4L67.0,56.0L59.1,55.9L59.3,55.2L59.0,56.1L61.0,57.0L57.8,56.4L62.1,56.6L62.1,57.7L63.3,57.7L64.5,57.9L64.3,58.8L67.3,58.2L66.8,58.7L67.6,59.2L67.7,59.8L67.2,59.3L66.3,59.5L64.6,60.1L63.3,59.4L62.9,60.1L62.1,59.5L59.2,60.4L60.0,60.9L58.0,61.0L58.0,61.3L56.3,61.0L56.4,61.5L59.2,61.9L58.4,62.9L59.8,62.9L61.3,63.3L61.3,63.1L62.4,62.9L64.9,62.6L64.3,62.5L67.3,63.3L67.7,63.3L68.6,62.9L69.6,63.7L68.6,64.6L68.2,64.5L66.7,65.3L65.9,65.0L65.5,65.7L64.4,65.6L62.5,65.5L61.5,66.0L60.4,67.0L61.0,67.2L59.8,67.9L60.0,69.0L60.8,69.3L62.5,70.2L63.0,70.6L64.9,71.0L66.8,70.9L67.3,72.0L66.8,73.2L68.6,73.2L71.2,73.0L71.6,73.1L72.4,73.0L73.8,73.0L74.0,73.8L74.7,75.1L73.0,75.7L72.3,76.2L72.1,77.0L70.3,77.7L69.6,78.1L67.5,78.3L66.0,78.9L65.1,79.4L64.0,79.8L62.6,80.1L61.6,80.3L62.3,80.0L63.7,80.3L65.1,80.1L66.0,79.9L67.6,79.5L68.8,78.9L70.3,78.7L71.9,78.4L73.2,77.5L73.8,77.0L75.7,76.2L76.0,75.7L77.3,75.4L79.2,74.6L79.8,74.2L80.8,73.3L82.2,72.5L82.6,71.6L83.0,71.6L85.2,72.1L87.0,72.1L87.8,71.6L89.8,71.2L91.0,71.2L91.3,70.7L93.2,69.8L94.3,69.5L94.8,69.5L96.5,70.1L96.3,70.5L98.3,70.7L99.9,70.7L101.5,71.0L102.3,71.1L103.5,70.7L105.0,71.0L105.0,71.1L107.0,71.4L108.7,71.8L109.8,72.7L110.5,73.3L110.7,74.2L111.9,75.2L113.1,75.6L114.9,76.3L114.8,77.0L116.6,78.0L117.9,78.4L118.4,78.9L120.1,79.4L121.7,79.4L122.8,79.1L122.8,77.7L119.3,75.9L116.6,73.3L114.0,71.6L110.5,72.5L107.9,70.7L103.5,70.2ZM82.6,74.4L83.6,74.9L84.0,75.2L82.9,75.8L82.1,75.9L80.8,76.3L80.8,75.8L79.6,75.1L81.6,75.0ZM135.0,89.8L133.6,90.3L132.0,90.9L132.6,92.1L133.0,93.5L133.2,94.7L133.0,96.2L133.0,97.5L132.6,98.8L132.7,100.3L133.1,101.8L132.8,103.4L132.9,105.0L133.6,106.1L134.4,107.2L135.3,108.3L135.9,109.3L136.3,110.6L137.3,111.8L137.9,113.1L138.5,114.2L139.7,114.8L141.2,115.2L142.9,115.9L143.7,116.7L144.1,117.6L145.1,118.5L149.3,118.5L156.0,120.6L160.9,120.6L160.9,119.7L163.8,119.7L167.3,123.6L170.0,124.6L170.8,123.2L173.5,123.4L176.1,127.2L176.9,129.1L180.1,130.0L180.2,128.7L179.9,127.2L180.9,126.5L181.7,125.6L183.1,124.9L183.9,124.3L185.2,123.8L186.0,123.4L187.5,123.5L188.8,123.9L190.1,124.1L191.2,124.2L192.7,124.4L194.1,124.6L193.6,123.6L193.6,122.5L194.8,122.4L196.2,122.3L197.8,122.5L199.0,122.8L200.5,122.9L202.0,123.0L203.2,122.9L204.4,123.7L205.3,124.8L205.7,126.0L205.6,127.2L206.5,128.4L207.0,129.8L207.9,130.5L208.4,131.4L209.6,131.0L209.9,129.6L210.2,128.4L209.5,126.9L209.1,125.5L208.5,124.3L208.0,122.9L207.7,121.6L208.0,120.5L208.8,119.4L209.8,118.6L210.6,117.6L211.9,116.8L213.4,116.1L214.0,115.6L215.4,114.9L216.7,114.3L217.9,113.6L217.5,112.4L217.2,110.9L217.5,109.9L218.4,109.0L219.2,107.9L219.9,107.1L220.3,106.2L220.3,105.3L220.6,104.6L222.0,104.4L223.1,103.9L224.1,103.7L225.6,103.4L226.4,103.1L227.6,102.7L227.3,101.9L226.4,101.0L227.3,99.9L227.6,99.0L228.7,98.4L230.3,98.0L231.3,97.7L232.9,97.1L232.9,96.8L231.5,95.6L231.1,92.8L229.0,92.6L226.8,95.1L225.0,96.8L218.9,96.8L216.3,98.5L211.9,99.4L211.9,100.4L204.9,102.0L206.0,100.3L205.8,96.3L202.3,94.2L195.5,91.1L194.4,91.6L189.2,90.9L184.3,89.3L183.9,89.8ZM77.3,139.9L78.3,140.4L79.1,140.8L78.6,141.5L77.8,142.2L77.1,140.8ZM73.5,137.5L74.3,138.0L73.6,138.0ZM76.1,138.7L77.3,138.8L76.6,139.2Z"/>
<path fill="#e1f2e1" d="M397.2,226.4L398.3,225.8L398.9,225.2L400.2,224.7L400.8,225.5L401.4,226.3L400.2,227.2L399.5,228.2L398.5,227.2Z"/>
<path fill="#e1f2e1" d="M404.2,220.2L405.8,220.0L406.1,221.6L405.3,222.1L404.5,222.3L404.2,221.2Z"/>
<path fill="#e1f2e1" d="M320.6,151.4L321.7,151.2L322.9,151.2L324.1,151.1L325.5,151.2L325.5,151.9L324.4,152.0L323.2,151.9L321.9,152.1L320.6,152.1Z"/>
</g>
<g transform="translate(-308,-91)">
<rect x="335" y="108.5" width="18" height="54.5" rx="9" fill="#004400"/>
<rect x="325.5" y="126.5" width="36.5" height="18.5" rx="9.2" fill="#004400"/>
<path d="M344,113 L349.2,121.2 L338.8,121.2Z M344,159 L349.2,150.6 L338.8,150.6Z M329.8,136 L338.4,131.4 L338.4,140.6Z M358.2,136 L349.6,131.4 L349.6,140.6Z" fill="#fff"/>
<rect x="335" y="167.5" width="18" height="54" rx="9" fill="#004400"/>
<path d="M339,177.8H349M344,172.8V182.8M339,211.6H349" stroke="#fff" stroke-width="2.2" fill="none"/>
<g fill="none" stroke="#c9c5f6" stroke-width="0.8"><circle cx="344" cy="194.6" r="8"/><ellipse cx="344" cy="194.6" rx="2.1" ry="8"/><ellipse cx="344" cy="194.6" rx="5.3" ry="8"/><path d="M336.3,192.6H351.7M336.3,196.6H351.7M338.2,189.2Q344,191 349.8,189.2M338.2,200Q344,198.2 349.8,200"/></g>
<g fill="#4a44d0"><circle cx="339.5" cy="192.4" r=".7"/><circle cx="348.6" cy="191" r=".7"/><circle cx="338.6" cy="197.6" r=".7"/><circle cx="343.8" cy="186.8" r=".8"/><circle cx="344.2" cy="202.4" r=".8"/><circle cx="352" cy="194.6" r=".7"/><circle cx="336" cy="194.6" r=".7"/></g>
</g>

</svg>
 </div>
 <div style="position:absolute;left:4px;top:400px;width:156px;height:20px;background:linear-gradient(90deg,#fff 0%,#fff 4%,#dff0df 20%,#8fc78f 50%,#3f953f 75%,#178417 86%,#06600a 95%,#004c00 100%);font-size:12.5px;line-height:16px;color:#111">
  <span style="position:absolute;left:6px;top:-1px">0</span><span style="position:absolute;left:95px;top:-1px">81,428</span>
 </div>
 <div class="hr" style="top:430px"></div>
 <div class="mh" style="left:19px;top:441px">Report View by Selection</div>
 <div class="lnk" style="left:623px;top:441px">Customize</div>
 <div class="hr" style="top:466px;background:#cfcfcf"></div>
 <div id="tbl" style="position:absolute;left:0;top:467px;width:710px;height:88px;background:#f7f7f7">
  <div style="position:absolute;left:0;top:0;width:710px;height:39px;background:#f3f3f3"></div>
  <div style="position:absolute;left:0;top:39px;width:710px;height:1px;background:#fff"></div>
  <div style="position:absolute;left:0;top:40px;width:710px;height:23px;background:#f9f9f9;border-bottom:1px solid #e3e3e3"></div>
  <div style="position:absolute;left:0;top:64px;width:710px;height:25px;background:#f9f9f9;border-bottom:1px solid #e3e3e3"></div>
  <div class="mh th" style="left:13px;top:3px;text-align:center;line-height:16px">Total:<br><span style="position:relative;left:-5.5px">2</span></div>
  <div class="mh th" style="left:80px;top:11px">Research Fields</div>
  <div class="mh th" style="left:216px;top:3px;text-align:center;line-height:16px">Web of Science<br><span style="position:relative;left:-5px">Documents</span></div>
  <div class="mh th" style="left:358px;top:11px;color:#4a78a8">Cites</div>
  <div style="position:absolute;left:395px;top:17px;width:0;height:0;border-left:4px solid transparent;border-right:4px solid transparent;border-top:4px solid #4a78a8"></div>
  <div class="mh th" style="left:457px;top:11px">Cites/Paper</div>
  <div class="mh th" style="left:592px;top:11px">Top Papers</div>
  <div class="td" style="left:0;width:57px;top:39px">1</div>
  <div class="td lk" style="left:79px;top:39px;text-align:left">ENGINEERING</div>
  <div class="td" style="left:250px;width:75px;top:39px">399</div>
  <div class="td" style="left:360px;width:77px;top:39px">3,330</div>
  <div class="td" style="left:480px;width:74px;top:39px">8.35</div>
  <div class="bar" style="top:40px">7</div>
  <div class="td" style="left:0;width:57px;top:65px">0</div>
  <div class="td lk" style="left:79px;top:65px;text-align:left">ALL FIELDS</div>
  <div class="td" style="left:250px;width:75px;top:65px">1,949</div>
  <div class="td" style="left:360px;width:77px;top:65px">16,174</div>
  <div class="td" style="left:480px;width:74px;top:65px">8.30</div>
  <div class="bar" style="top:66px">17</div>
 </div>
</div>
</div>
<style>
.td{position:absolute;font-size:14px;color:#333;text-align:right;white-space:nowrap;line-height:20px}
.lk{color:#0a5685;font-weight:bold;font-size:14px}
.bar{position:absolute;left:604px;width:100px;height:17px;border:1px solid #5585d4;background:linear-gradient(#9fc0f1,#7aa3e6 45%,#5c8bd9);color:#fff;font-size:12.5px;line-height:15px;text-align:right;padding-right:0;letter-spacing:-.6px;text-shadow:0 0 .6px #fff}
</style>
</body></html>
